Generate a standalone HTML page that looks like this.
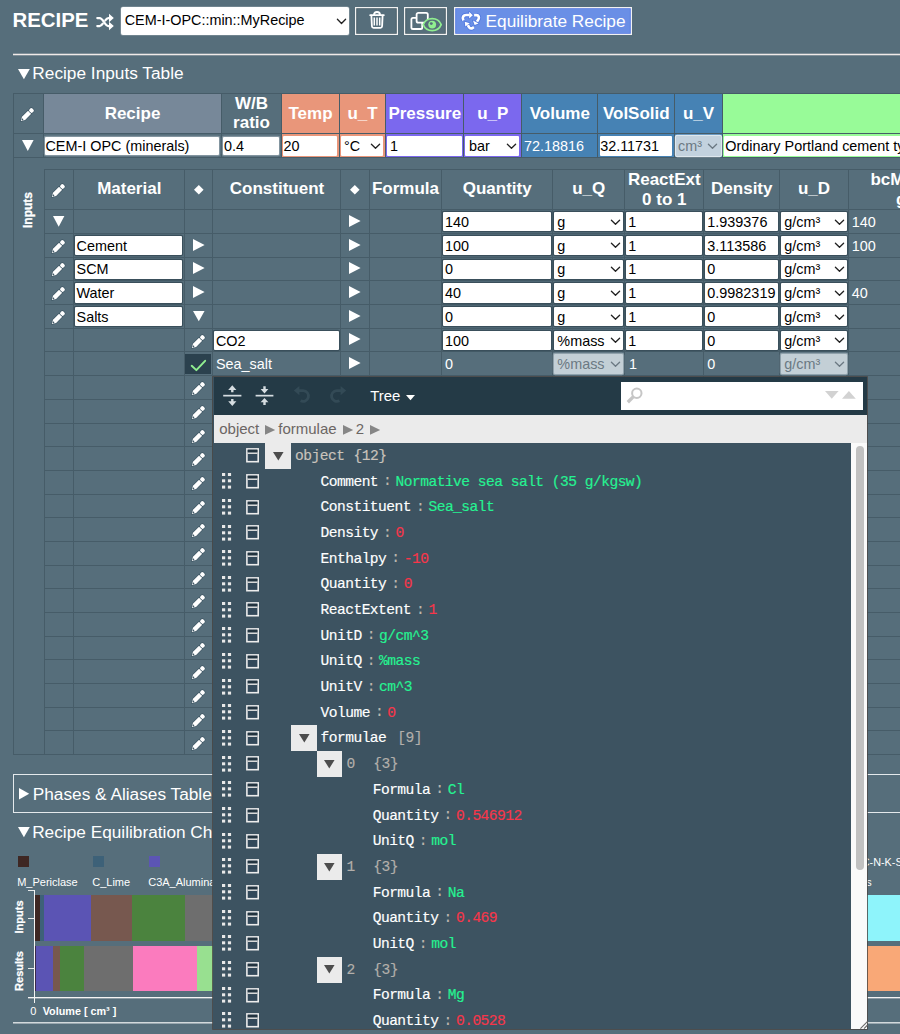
<!DOCTYPE html>
<html lang="en"><head><meta charset="utf-8"><title>Recipe</title>
<style>
html,body{margin:0;padding:0;width:900px;height:1034px;overflow:hidden;background:#566e7b;}
body{font-family:"Liberation Sans",sans-serif;}
#app{position:relative;left:0;top:0;width:900px;height:1034px;overflow:hidden;background:#566e7b;}
#app div,#app svg{position:absolute;box-sizing:border-box;}
svg{overflow:visible;display:block;}
</style></head><body><main id="app">
<div style="top:7.30px;font-size:20.4px;line-height:26px;height:26px;color:#fff;white-space:pre;font-weight:bold;left:12.53px;">RECIPE</div>
<svg style="left:96.00px;top:13.70px;" width="18" height="16" viewBox="0 0 18 16"><g fill="none" stroke="#fff" stroke-width="2.25" stroke-linecap="round" stroke-linejoin="round"><path d="M1.3 4 H3.6 C7.4 4 8.6 12 12.4 12 H14"/><path d="M1.3 12 H3.6 C5 12 6 10.9 6.8 9.7"/><path d="M9.3 6.3 C10.1 5.1 11 4 12.4 4 H14"/></g><path d="M13 -0.2 L17.8 4 L13 8.2 Z M13 7.8 L17.8 12 L13 16.2 Z" fill="#fff"/></svg>
<div style="left:121.00px;top:6.60px;width:228.00px;height:28.20px;background:#fff;border-radius:2px;box-shadow:0 0 0 0.6px #8a9aa3;"></div>
<div style="top:10.10px;font-size:14.4px;line-height:20px;height:20px;color:#000;white-space:pre;left:124.66px;">CEM-I-OPC::min::MyRecipe</div>
<svg style="left:336.50px;top:17.60px;" width="9" height="6.8" viewBox="0 0 9 6.8"><path d="M0.4 1.3 L4.5 5.5 L8.6 1.3" fill="none" stroke="#222" stroke-width="1.3" stroke-linecap="round" stroke-linejoin="round"/></svg>
<div style="left:355.00px;top:6.70px;width:43.00px;height:28.20px;background:#566e7b;box-shadow:inset 0 0 0 1.25px #f2f2f2, inset 0 0 0 2.1px rgba(40,58,68,.5);"></div>
<svg style="left:368.60px;top:11.00px;" width="16" height="18" viewBox="0 0 16 18"><g fill="none" stroke="#fff" stroke-width="1.8" stroke-linecap="round" stroke-linejoin="round"><path d="M1.2 4.2 H14.8"/><path d="M5 3.8 Q5 1 8 1 Q11 1 11 3.8"/><path d="M2.4 4.6 L2.9 15.2 Q3 16.8 4.6 16.8 H11.4 Q13 16.8 13.1 15.2 L13.6 4.6"/></g><g fill="none" stroke="#fff" stroke-width="1.5" stroke-linecap="butt"><path d="M5.3 6.6 V14.4 M8 6.6 V14.4 M10.7 6.6 V14.4"/></g></svg>
<div style="left:404.00px;top:6.70px;width:43.00px;height:28.20px;background:#566e7b;box-shadow:inset 0 0 0 1.25px #f2f2f2, inset 0 0 0 2.1px rgba(40,58,68,.5);"></div>
<svg style="left:410.00px;top:11.50px;" width="34" height="20" viewBox="0 0 34 20"><g fill="none" stroke="#fff" stroke-width="1.8" stroke-linejoin="round"><rect x="6.6" y="0.9" width="11.2" height="9.8" rx="1.7"/><path d="M6.6 5.8 H3 Q1.4 5.8 1.4 7.4 V15.4 Q1.4 17 3 17 H10.6 Q12.2 17 12.2 15.4 V10.7"/></g><g fill="none" stroke="#90ee90" stroke-width="1.7" stroke-linejoin="round"><path d="M13.2 12.6 C16.5 4.6 27.9 4.6 31.2 12.6 C27.9 20.6 16.5 20.6 13.2 12.6 Z" fill="#566e7b"/></g><circle cx="22.2" cy="12.6" r="3.9" fill="#90ee90"/><circle cx="21.3" cy="11.6" r="1.45" fill="#566e7b"/></svg>
<div style="left:453.60px;top:6.70px;width:178.00px;height:28.20px;background:#6a8fe6;box-shadow:inset 0 0 0 1.25px #f2f2f2, inset 0 0 0 2.1px #4a70e0;"></div>
<svg style="left:456.00px;top:6.00px;" width="32" height="30" viewBox="0 0 32 30"><g fill="none" stroke="#4f76df" stroke-width="4.3" stroke-linejoin="round"><path d="M7.4 14.3 C5.9 11.2 7.4 9.0 10.2 9.0 H13.4"/><path d="M18.1 9.1 H20.4 C22.6 9.1 23.6 11.4 22.4 13.4 L21.0 15.6"/><path d="M17.9 21.1 L16.6 22.0 C15.0 22.8 13.6 22.2 12.8 20.8 L11.9 19.2"/></g><g fill="#4f76df" stroke="#4f76df" stroke-width="1.6" stroke-linejoin="round"><path d="M13.2 5.7 L16.8 9.2 L13.2 12.4 Z"/><path d="M17.0 14.6 L22.6 17.4 L18.6 18.9 Z"/><path d="M8.7 15.8 L13.8 17.3 L9.3 20.4 Z"/></g><g fill="none" stroke="#fff" stroke-width="2.7" stroke-linejoin="round"><path d="M7.4 14.3 C5.9 11.2 7.4 9.0 10.2 9.0 H13.4"/><path d="M18.1 9.1 H20.4 C22.6 9.1 23.6 11.4 22.4 13.4 L21.0 15.6"/><path d="M17.9 21.1 L16.6 22.0 C15.0 22.8 13.6 22.2 12.8 20.8 L11.9 19.2"/></g><g fill="#fff"><path d="M13.2 5.7 L16.8 9.2 L13.2 12.4 Z"/><path d="M17.0 14.6 L22.6 17.4 L18.6 18.9 Z"/><path d="M8.7 15.8 L13.8 17.3 L9.3 20.4 Z"/></g></svg>
<div style="top:8.80px;font-size:17.25px;line-height:24px;height:24px;color:#fff;white-space:pre;left:485.56px;">Equilibrate Recipe</div>
<div style="left:13.00px;top:54.00px;width:887.00px;height:1.00px;background:#f0eae8;"></div>
<div style="left:13.00px;top:53.00px;width:887.00px;height:1.00px;background:rgba(240,234,232,.28);"></div>
<div style="left:13.00px;top:55.00px;width:887.00px;height:1.00px;background:rgba(240,234,232,.28);"></div>
<svg style="left:17.90px;top:68.90px;" width="11.8" height="10.2" viewBox="0 0 11.8 10.2"><path d="M0 0 H11.8 L5.9 10.2 Z" fill="#fff"/></svg>
<div style="top:61.40px;font-size:17.25px;line-height:24px;height:24px;color:#fff;white-space:pre;left:32.36px;">Recipe Inputs Table</div>
<div style="left:43.00px;top:92.60px;width:178.00px;height:40.60px;background:#778899;"></div>
<div style="left:281.00px;top:92.60px;width:58.00px;height:40.60px;background:#e9967a;"></div>
<div style="left:281.00px;top:133.20px;width:58.00px;height:24.00px;background:#e9967a;"></div>
<div style="left:339.00px;top:92.60px;width:46.00px;height:40.60px;background:#e9967a;"></div>
<div style="left:339.00px;top:133.20px;width:46.00px;height:24.00px;background:#e9967a;"></div>
<div style="left:385.00px;top:92.60px;width:78.60px;height:40.60px;background:#7b68ee;"></div>
<div style="left:385.00px;top:133.20px;width:78.60px;height:24.00px;background:#7b68ee;"></div>
<div style="left:463.60px;top:92.60px;width:57.40px;height:40.60px;background:#7b68ee;"></div>
<div style="left:463.60px;top:133.20px;width:57.40px;height:24.00px;background:#7b68ee;"></div>
<div style="left:521.00px;top:92.60px;width:76.60px;height:40.60px;background:#4682b4;"></div>
<div style="left:521.00px;top:133.20px;width:76.60px;height:24.00px;background:#4682b4;"></div>
<div style="left:597.60px;top:92.60px;width:76.40px;height:40.60px;background:#4682b4;"></div>
<div style="left:597.60px;top:133.20px;width:76.40px;height:24.00px;background:#4682b4;"></div>
<div style="left:674.00px;top:92.60px;width:48.00px;height:40.60px;background:#4682b4;"></div>
<div style="left:674.00px;top:133.20px;width:48.00px;height:24.00px;background:#4682b4;"></div>
<div style="left:722.00px;top:92.60px;width:179.00px;height:40.60px;background:#98fb98;"></div>
<div style="left:722.00px;top:133.20px;width:179.00px;height:24.00px;background:#98fb98;"></div>
<div style="left:13.00px;top:92.60px;width:1.00px;height:64.60px;background:#465c68;"></div>
<div style="left:43.00px;top:92.60px;width:1.00px;height:64.60px;background:#465c68;"></div>
<div style="left:221.00px;top:92.60px;width:1.00px;height:64.60px;background:#465c68;"></div>
<div style="left:281.00px;top:92.60px;width:1.00px;height:64.60px;background:#465c68;"></div>
<div style="left:339.00px;top:92.60px;width:1.00px;height:64.60px;background:#465c68;"></div>
<div style="left:385.00px;top:92.60px;width:1.00px;height:64.60px;background:#465c68;"></div>
<div style="left:463.00px;top:92.60px;width:1.00px;height:64.60px;background:#465c68;"></div>
<div style="left:521.00px;top:92.60px;width:1.00px;height:64.60px;background:#465c68;"></div>
<div style="left:597.00px;top:92.60px;width:1.00px;height:64.60px;background:#465c68;"></div>
<div style="left:674.00px;top:92.60px;width:1.00px;height:64.60px;background:#465c68;"></div>
<div style="left:722.00px;top:92.60px;width:1.00px;height:64.60px;background:#465c68;"></div>
<div style="left:13.00px;top:92.60px;width:887.00px;height:1.00px;background:#465c68;"></div>
<div style="left:13.00px;top:133.20px;width:887.00px;height:1.00px;background:#465c68;"></div>
<div style="left:13.00px;top:157.20px;width:887.00px;height:1.00px;background:#465c68;"></div>
<svg style="left:20.10px;top:107.30px;" width="15" height="15" viewBox="-0.5 -0.5 15 15"><g transform="translate(0.3,13.6) rotate(-45)" stroke="#3d5563" stroke-width="1.2" paint-order="stroke" fill="#fff" stroke-linejoin="round"><path d="M0 0 L3.9 -2.25 L12.5 -2.25 L12.5 2.25 L3.9 2.25 Z"/><rect x="13.05" y="-2.25" width="4.1" height="4.5" rx="1.6"/><circle cx="2.3" cy="0" r="0.85" fill="#3d5563" stroke="none"/></g></svg>
<div style="top:102.00px;font-size:17px;line-height:23px;height:23px;color:#fff;white-space:pre;font-weight:bold;left:32.50px;width:200px;text-align:center;">Recipe</div>
<div style="top:91.90px;font-size:17px;line-height:23px;height:23px;color:#fff;white-space:pre;font-weight:bold;left:151.50px;width:200px;text-align:center;">W/B</div>
<div style="top:111.10px;font-size:17px;line-height:23px;height:23px;color:#fff;white-space:pre;font-weight:bold;left:151.50px;width:200px;text-align:center;">ratio</div>
<div style="top:102.00px;font-size:17px;line-height:23px;height:23px;color:#fff;white-space:pre;font-weight:bold;left:210.50px;width:200px;text-align:center;">Temp</div>
<div style="top:102.00px;font-size:17px;line-height:23px;height:23px;color:#fff;white-space:pre;font-weight:bold;left:262.50px;width:200px;text-align:center;">u_T</div>
<div style="top:102.00px;font-size:17px;line-height:23px;height:23px;color:#fff;white-space:pre;font-weight:bold;left:324.80px;width:200px;text-align:center;">Pressure</div>
<div style="top:102.00px;font-size:17px;line-height:23px;height:23px;color:#fff;white-space:pre;font-weight:bold;left:392.80px;width:200px;text-align:center;">u_P</div>
<div style="top:102.00px;font-size:17px;line-height:23px;height:23px;color:#fff;white-space:pre;font-weight:bold;left:459.80px;width:200px;text-align:center;">Volume</div>
<div style="top:102.00px;font-size:17px;line-height:23px;height:23px;color:#fff;white-space:pre;font-weight:bold;left:536.30px;width:200px;text-align:center;">VolSolid</div>
<div style="top:102.00px;font-size:17px;line-height:23px;height:23px;color:#fff;white-space:pre;font-weight:bold;left:598.50px;width:200px;text-align:center;">u_V</div>
<svg style="left:22.40px;top:140.40px;" width="11.6" height="11" viewBox="0 0 11.6 11"><path d="M0 0 H11.6 L5.8 11 Z" fill="#fff"/></svg>
<div style="left:44.60px;top:136.60px;width:174.60px;height:18.80px;background:#fff;border-radius:1px;box-shadow:0 0 0 1.15px #8395a0;"></div>
<div style="top:135.60px;font-size:14.4px;line-height:20px;height:20px;color:#000;white-space:pre;left:45.46px;">CEM-I OPC (minerals)</div>
<div style="left:222.60px;top:136.60px;width:56.40px;height:18.80px;background:#fff;border-radius:1px;box-shadow:0 0 0 1.15px #8395a0;"></div>
<div style="top:135.60px;font-size:14.4px;line-height:20px;height:20px;color:#000;white-space:pre;left:223.96px;">0.4</div>
<div style="left:283.20px;top:136.20px;width:53.80px;height:19.40px;background:#fff;border-radius:1px;"></div>
<div style="top:135.60px;font-size:14.4px;line-height:20px;height:20px;color:#000;white-space:pre;left:283.56px;">20</div>
<div style="left:340.80px;top:136.20px;width:42.60px;height:19.40px;background:#fff;border-radius:1px;"></div>
<div style="top:135.60px;font-size:14.4px;line-height:20px;height:20px;color:#000;white-space:pre;left:343.96px;">°C</div>
<svg style="left:371.20px;top:143.20px;" width="9" height="6.6" viewBox="0 0 9 6.6"><path d="M0.4 1.3 L4.5 5.3 L8.6 1.3" fill="none" stroke="#222" stroke-width="1.3" stroke-linecap="round" stroke-linejoin="round"/></svg>
<div style="left:387.20px;top:136.20px;width:74.40px;height:19.40px;background:#fff;border-radius:1px;"></div>
<div style="top:135.60px;font-size:14.4px;line-height:20px;height:20px;color:#000;white-space:pre;left:389.96px;">1</div>
<div style="left:465.40px;top:136.20px;width:54.00px;height:19.40px;background:#fff;border-radius:1px;"></div>
<div style="top:135.60px;font-size:14.4px;line-height:20px;height:20px;color:#000;white-space:pre;left:468.96px;">bar</div>
<svg style="left:506.50px;top:143.20px;" width="9" height="6.6" viewBox="0 0 9 6.6"><path d="M0.4 1.3 L4.5 5.3 L8.6 1.3" fill="none" stroke="#222" stroke-width="1.3" stroke-linecap="round" stroke-linejoin="round"/></svg>
<div style="top:135.60px;font-size:14.4px;line-height:20px;height:20px;color:#fff;white-space:pre;left:523.96px;">72.18816</div>
<div style="left:599.60px;top:136.20px;width:72.40px;height:19.40px;background:#fff;border-radius:1px;"></div>
<div style="top:135.60px;font-size:14.4px;line-height:20px;height:20px;color:#000;white-space:pre;left:600.16px;">32.11731</div>
<div style="left:675.60px;top:136.20px;width:45.00px;height:19.40px;background:#c3d2de;border-radius:1px;box-shadow:0 0 0 1.15px #dfe8ee;"></div>
<div style="top:135.60px;font-size:14.4px;line-height:20px;height:20px;color:#6b7983;white-space:pre;left:677.96px;">cm³</div>
<svg style="left:708.40px;top:143.20px;" width="9" height="6.6" viewBox="0 0 9 6.6"><path d="M0.4 1.3 L4.5 5.3 L8.6 1.3" fill="none" stroke="#6b7983" stroke-width="1.3" stroke-linecap="round" stroke-linejoin="round"/></svg>
<div style="left:724.00px;top:136.20px;width:180.00px;height:19.40px;background:#fff;border-radius:1px;"></div>
<div style="top:135.60px;font-size:14.4px;line-height:20px;height:20px;color:#000;white-space:pre;left:725.36px;">Ordinary Portland cement type I (minerals)</div>
<div style="left:13.00px;top:157.20px;width:1.00px;height:597.97px;background:#465c68;"></div>
<div style="left:13.00px;top:754.17px;width:887.00px;height:1.00px;background:#465c68;"></div>
<div style="left:-22px;top:200px;width:100px;height:20px;line-height:20px;text-align:center;font-size:12px;font-weight:bold;color:#fff;-webkit-text-stroke:0.3px #fff;transform:rotate(-90deg);">Inputs</div>
<div style="left:44.00px;top:168.80px;width:1.00px;height:585.37px;background:#465c68;"></div>
<div style="left:73.00px;top:168.80px;width:1.00px;height:585.37px;background:#465c68;"></div>
<div style="left:184.00px;top:168.80px;width:1.00px;height:585.37px;background:#465c68;"></div>
<div style="left:212.00px;top:168.80px;width:1.00px;height:585.37px;background:#465c68;"></div>
<div style="left:340.00px;top:168.80px;width:1.00px;height:585.37px;background:#465c68;"></div>
<div style="left:369.00px;top:168.80px;width:1.00px;height:585.37px;background:#465c68;"></div>
<div style="left:441.00px;top:168.80px;width:1.00px;height:585.37px;background:#465c68;"></div>
<div style="left:552.00px;top:168.80px;width:1.00px;height:585.37px;background:#465c68;"></div>
<div style="left:624.00px;top:168.80px;width:1.00px;height:585.37px;background:#465c68;"></div>
<div style="left:703.00px;top:168.80px;width:1.00px;height:585.37px;background:#465c68;"></div>
<div style="left:779.00px;top:168.80px;width:1.00px;height:585.37px;background:#465c68;"></div>
<div style="left:848.00px;top:168.80px;width:1.00px;height:585.37px;background:#465c68;"></div>
<div style="left:44.50px;top:168.80px;width:855.50px;height:1.00px;background:#465c68;"></div>
<div style="left:44.50px;top:209.30px;width:855.50px;height:1.00px;background:#465c68;"></div>
<div style="left:44.50px;top:232.99px;width:855.50px;height:1.00px;background:#465c68;"></div>
<div style="left:44.50px;top:256.68px;width:855.50px;height:1.00px;background:#465c68;"></div>
<div style="left:44.50px;top:280.37px;width:855.50px;height:1.00px;background:#465c68;"></div>
<div style="left:44.50px;top:304.06px;width:855.50px;height:1.00px;background:#465c68;"></div>
<div style="left:44.50px;top:327.75px;width:855.50px;height:1.00px;background:#465c68;"></div>
<div style="left:44.50px;top:351.44px;width:855.50px;height:1.00px;background:#465c68;"></div>
<div style="left:44.50px;top:375.13px;width:855.50px;height:1.00px;background:#465c68;"></div>
<div style="left:44.50px;top:398.82px;width:855.50px;height:1.00px;background:#465c68;"></div>
<div style="left:44.50px;top:422.51px;width:855.50px;height:1.00px;background:#465c68;"></div>
<div style="left:44.50px;top:446.20px;width:855.50px;height:1.00px;background:#465c68;"></div>
<div style="left:44.50px;top:469.89px;width:855.50px;height:1.00px;background:#465c68;"></div>
<div style="left:44.50px;top:493.58px;width:855.50px;height:1.00px;background:#465c68;"></div>
<div style="left:44.50px;top:517.27px;width:855.50px;height:1.00px;background:#465c68;"></div>
<div style="left:44.50px;top:540.96px;width:855.50px;height:1.00px;background:#465c68;"></div>
<div style="left:44.50px;top:564.65px;width:855.50px;height:1.00px;background:#465c68;"></div>
<div style="left:44.50px;top:588.34px;width:855.50px;height:1.00px;background:#465c68;"></div>
<div style="left:44.50px;top:612.03px;width:855.50px;height:1.00px;background:#465c68;"></div>
<div style="left:44.50px;top:635.72px;width:855.50px;height:1.00px;background:#465c68;"></div>
<div style="left:44.50px;top:659.41px;width:855.50px;height:1.00px;background:#465c68;"></div>
<div style="left:44.50px;top:683.10px;width:855.50px;height:1.00px;background:#465c68;"></div>
<div style="left:44.50px;top:706.79px;width:855.50px;height:1.00px;background:#465c68;"></div>
<div style="left:44.50px;top:730.48px;width:855.50px;height:1.00px;background:#465c68;"></div>
<div style="left:44.50px;top:754.17px;width:855.50px;height:1.00px;background:#465c68;"></div>
<svg style="left:51.30px;top:183.10px;" width="15" height="15" viewBox="-0.5 -0.5 15 15"><g transform="translate(0.3,13.6) rotate(-45)" stroke="#3d5563" stroke-width="1.2" paint-order="stroke" fill="#fff" stroke-linejoin="round"><path d="M0 0 L3.9 -2.25 L12.5 -2.25 L12.5 2.25 L3.9 2.25 Z"/><rect x="13.05" y="-2.25" width="4.1" height="4.5" rx="1.6"/><circle cx="2.3" cy="0" r="0.85" fill="#3d5563" stroke="none"/></g></svg>
<div style="top:177.00px;font-size:17px;line-height:23px;height:23px;color:#fff;white-space:pre;font-weight:bold;left:29.25px;width:200px;text-align:center;">Material</div>
<svg style="left:193.60px;top:185.00px;" width="9.6" height="9.6" viewBox="0 0 9.6 9.6"><path d="M4.8 0 L9.6 4.8 L4.8 9.6 L0 4.8 Z" fill="#fff"/></svg>
<div style="top:177.00px;font-size:17px;line-height:23px;height:23px;color:#fff;white-space:pre;font-weight:bold;left:177.00px;width:200px;text-align:center;">Constituent</div>
<svg style="left:350.00px;top:185.00px;" width="9.6" height="9.6" viewBox="0 0 9.6 9.6"><path d="M4.8 0 L9.6 4.8 L4.8 9.6 L0 4.8 Z" fill="#fff"/></svg>
<div style="top:177.00px;font-size:17px;line-height:23px;height:23px;color:#fff;white-space:pre;font-weight:bold;left:305.50px;width:200px;text-align:center;">Formula</div>
<div style="top:177.00px;font-size:17px;line-height:23px;height:23px;color:#fff;white-space:pre;font-weight:bold;left:397.25px;width:200px;text-align:center;">Quantity</div>
<div style="top:177.00px;font-size:17px;line-height:23px;height:23px;color:#fff;white-space:pre;font-weight:bold;left:488.75px;width:200px;text-align:center;">u_Q</div>
<div style="top:168.40px;font-size:17px;line-height:23px;height:23px;color:#fff;white-space:pre;font-weight:bold;left:564.30px;width:200px;text-align:center;">ReactExt</div>
<div style="top:187.50px;font-size:17px;line-height:23px;height:23px;color:#fff;white-space:pre;font-weight:bold;left:564.30px;width:200px;text-align:center;">0 to 1</div>
<div style="top:177.00px;font-size:17px;line-height:23px;height:23px;color:#fff;white-space:pre;font-weight:bold;left:641.80px;width:200px;text-align:center;">Density</div>
<div style="top:177.00px;font-size:17px;line-height:23px;height:23px;color:#fff;white-space:pre;font-weight:bold;left:714.00px;width:200px;text-align:center;">u_D</div>
<div style="top:168.40px;font-size:17px;line-height:23px;height:23px;color:#fff;white-space:pre;font-weight:bold;left:870.38px;">bcMass</div>
<div style="top:187.50px;font-size:17px;line-height:23px;height:23px;color:#fff;white-space:pre;font-weight:bold;left:896.08px;">g</div>
<svg style="left:53.30px;top:216.20px;" width="11.4" height="10.8" viewBox="0 0 11.4 10.8"><path d="M0 0 H11.4 L5.7 10.8 Z" fill="#fff"/></svg>
<div style="left:443.00px;top:212.20px;width:108.00px;height:19.30px;background:#fff;border-radius:1px;box-shadow:0 0 0 1.15px #3a4f5b;"></div>
<div style="top:212.10px;font-size:14.4px;line-height:20px;height:20px;color:#000;white-space:pre;left:444.96px;">140</div>
<div style="left:553.80px;top:212.20px;width:69.20px;height:19.30px;background:#fff;border-radius:1px;box-shadow:0 0 0 1.15px #3a4f5b;"></div>
<div style="top:212.10px;font-size:14.4px;line-height:20px;height:20px;color:#000;white-space:pre;left:557.36px;">g</div>
<svg style="left:610.60px;top:218.80px;" width="9" height="6.6" viewBox="0 0 9 6.6"><path d="M0.4 1.3 L4.5 5.3 L8.6 1.3" fill="none" stroke="#222" stroke-width="1.3" stroke-linecap="round" stroke-linejoin="round"/></svg>
<div style="left:625.80px;top:212.20px;width:75.80px;height:19.30px;background:#fff;border-radius:1px;box-shadow:0 0 0 1.15px #3a4f5b;"></div>
<div style="top:212.10px;font-size:14.4px;line-height:20px;height:20px;color:#000;white-space:pre;left:628.16px;">1</div>
<div style="left:705.20px;top:212.20px;width:72.60px;height:19.30px;background:#fff;border-radius:1px;box-shadow:0 0 0 1.15px #3a4f5b;"></div>
<div style="top:212.10px;font-size:14.4px;line-height:20px;height:20px;color:#000;white-space:pre;left:707.36px;">1.939376</div>
<div style="left:780.60px;top:212.20px;width:66.00px;height:19.30px;background:#fff;border-radius:1px;box-shadow:0 0 0 1.15px #3a4f5b;"></div>
<div style="top:212.10px;font-size:14.4px;line-height:20px;height:20px;color:#000;white-space:pre;left:784.36px;">g/cm³</div>
<svg style="left:834.60px;top:218.80px;" width="9" height="6.6" viewBox="0 0 9 6.6"><path d="M0.4 1.3 L4.5 5.3 L8.6 1.3" fill="none" stroke="#222" stroke-width="1.3" stroke-linecap="round" stroke-linejoin="round"/></svg>
<div style="top:212.10px;font-size:14.4px;line-height:20px;height:20px;color:#fff;white-space:pre;left:851.76px;">140</div>
<svg style="left:349.00px;top:215.00px;" width="11.6" height="12" viewBox="0 0 11.6 12"><path d="M0 0 L11.6 6.0 L0 12 Z" fill="#fff"/></svg>
<svg style="left:51.30px;top:238.79px;" width="15" height="15" viewBox="-0.5 -0.5 15 15"><g transform="translate(0.3,13.6) rotate(-45)" stroke="#3d5563" stroke-width="1.2" paint-order="stroke" fill="#fff" stroke-linejoin="round"><path d="M0 0 L3.9 -2.25 L12.5 -2.25 L12.5 2.25 L3.9 2.25 Z"/><rect x="13.05" y="-2.25" width="4.1" height="4.5" rx="1.6"/><circle cx="2.3" cy="0" r="0.85" fill="#3d5563" stroke="none"/></g></svg>
<div style="left:75.00px;top:235.89px;width:107.40px;height:19.30px;background:#fff;border-radius:1px;box-shadow:0 0 0 1.15px #3a4f5b;"></div>
<div style="top:235.79px;font-size:14.4px;line-height:20px;height:20px;color:#000;white-space:pre;left:76.56px;">Cement</div>
<svg style="left:193.20px;top:238.69px;" width="11.6" height="12" viewBox="0 0 11.6 12"><path d="M0 0 L11.6 6.0 L0 12 Z" fill="#fff"/></svg>
<div style="left:443.00px;top:235.89px;width:108.00px;height:19.30px;background:#fff;border-radius:1px;box-shadow:0 0 0 1.15px #3a4f5b;"></div>
<div style="top:235.79px;font-size:14.4px;line-height:20px;height:20px;color:#000;white-space:pre;left:444.96px;">100</div>
<div style="left:553.80px;top:235.89px;width:69.20px;height:19.30px;background:#fff;border-radius:1px;box-shadow:0 0 0 1.15px #3a4f5b;"></div>
<div style="top:235.79px;font-size:14.4px;line-height:20px;height:20px;color:#000;white-space:pre;left:557.36px;">g</div>
<svg style="left:610.60px;top:242.49px;" width="9" height="6.6" viewBox="0 0 9 6.6"><path d="M0.4 1.3 L4.5 5.3 L8.6 1.3" fill="none" stroke="#222" stroke-width="1.3" stroke-linecap="round" stroke-linejoin="round"/></svg>
<div style="left:625.80px;top:235.89px;width:75.80px;height:19.30px;background:#fff;border-radius:1px;box-shadow:0 0 0 1.15px #3a4f5b;"></div>
<div style="top:235.79px;font-size:14.4px;line-height:20px;height:20px;color:#000;white-space:pre;left:628.16px;">1</div>
<div style="left:705.20px;top:235.89px;width:72.60px;height:19.30px;background:#fff;border-radius:1px;box-shadow:0 0 0 1.15px #3a4f5b;"></div>
<div style="top:235.79px;font-size:14.4px;line-height:20px;height:20px;color:#000;white-space:pre;left:707.36px;">3.113586</div>
<div style="left:780.60px;top:235.89px;width:66.00px;height:19.30px;background:#fff;border-radius:1px;box-shadow:0 0 0 1.15px #3a4f5b;"></div>
<div style="top:235.79px;font-size:14.4px;line-height:20px;height:20px;color:#000;white-space:pre;left:784.36px;">g/cm³</div>
<svg style="left:834.60px;top:242.49px;" width="9" height="6.6" viewBox="0 0 9 6.6"><path d="M0.4 1.3 L4.5 5.3 L8.6 1.3" fill="none" stroke="#222" stroke-width="1.3" stroke-linecap="round" stroke-linejoin="round"/></svg>
<div style="top:235.79px;font-size:14.4px;line-height:20px;height:20px;color:#fff;white-space:pre;left:851.76px;">100</div>
<svg style="left:349.00px;top:238.69px;" width="11.6" height="12" viewBox="0 0 11.6 12"><path d="M0 0 L11.6 6.0 L0 12 Z" fill="#fff"/></svg>
<svg style="left:51.30px;top:262.48px;" width="15" height="15" viewBox="-0.5 -0.5 15 15"><g transform="translate(0.3,13.6) rotate(-45)" stroke="#3d5563" stroke-width="1.2" paint-order="stroke" fill="#fff" stroke-linejoin="round"><path d="M0 0 L3.9 -2.25 L12.5 -2.25 L12.5 2.25 L3.9 2.25 Z"/><rect x="13.05" y="-2.25" width="4.1" height="4.5" rx="1.6"/><circle cx="2.3" cy="0" r="0.85" fill="#3d5563" stroke="none"/></g></svg>
<div style="left:75.00px;top:259.58px;width:107.40px;height:19.30px;background:#fff;border-radius:1px;box-shadow:0 0 0 1.15px #3a4f5b;"></div>
<div style="top:259.48px;font-size:14.4px;line-height:20px;height:20px;color:#000;white-space:pre;left:76.56px;">SCM</div>
<svg style="left:193.20px;top:262.38px;" width="11.6" height="12" viewBox="0 0 11.6 12"><path d="M0 0 L11.6 6.0 L0 12 Z" fill="#fff"/></svg>
<div style="left:443.00px;top:259.58px;width:108.00px;height:19.30px;background:#fff;border-radius:1px;box-shadow:0 0 0 1.15px #3a4f5b;"></div>
<div style="top:259.48px;font-size:14.4px;line-height:20px;height:20px;color:#000;white-space:pre;left:444.96px;">0</div>
<div style="left:553.80px;top:259.58px;width:69.20px;height:19.30px;background:#fff;border-radius:1px;box-shadow:0 0 0 1.15px #3a4f5b;"></div>
<div style="top:259.48px;font-size:14.4px;line-height:20px;height:20px;color:#000;white-space:pre;left:557.36px;">g</div>
<svg style="left:610.60px;top:266.18px;" width="9" height="6.6" viewBox="0 0 9 6.6"><path d="M0.4 1.3 L4.5 5.3 L8.6 1.3" fill="none" stroke="#222" stroke-width="1.3" stroke-linecap="round" stroke-linejoin="round"/></svg>
<div style="left:625.80px;top:259.58px;width:75.80px;height:19.30px;background:#fff;border-radius:1px;box-shadow:0 0 0 1.15px #3a4f5b;"></div>
<div style="top:259.48px;font-size:14.4px;line-height:20px;height:20px;color:#000;white-space:pre;left:628.16px;">1</div>
<div style="left:705.20px;top:259.58px;width:72.60px;height:19.30px;background:#fff;border-radius:1px;box-shadow:0 0 0 1.15px #3a4f5b;"></div>
<div style="top:259.48px;font-size:14.4px;line-height:20px;height:20px;color:#000;white-space:pre;left:707.36px;">0</div>
<div style="left:780.60px;top:259.58px;width:66.00px;height:19.30px;background:#fff;border-radius:1px;box-shadow:0 0 0 1.15px #3a4f5b;"></div>
<div style="top:259.48px;font-size:14.4px;line-height:20px;height:20px;color:#000;white-space:pre;left:784.36px;">g/cm³</div>
<svg style="left:834.60px;top:266.18px;" width="9" height="6.6" viewBox="0 0 9 6.6"><path d="M0.4 1.3 L4.5 5.3 L8.6 1.3" fill="none" stroke="#222" stroke-width="1.3" stroke-linecap="round" stroke-linejoin="round"/></svg>
<svg style="left:349.00px;top:262.38px;" width="11.6" height="12" viewBox="0 0 11.6 12"><path d="M0 0 L11.6 6.0 L0 12 Z" fill="#fff"/></svg>
<svg style="left:51.30px;top:286.17px;" width="15" height="15" viewBox="-0.5 -0.5 15 15"><g transform="translate(0.3,13.6) rotate(-45)" stroke="#3d5563" stroke-width="1.2" paint-order="stroke" fill="#fff" stroke-linejoin="round"><path d="M0 0 L3.9 -2.25 L12.5 -2.25 L12.5 2.25 L3.9 2.25 Z"/><rect x="13.05" y="-2.25" width="4.1" height="4.5" rx="1.6"/><circle cx="2.3" cy="0" r="0.85" fill="#3d5563" stroke="none"/></g></svg>
<div style="left:75.00px;top:283.27px;width:107.40px;height:19.30px;background:#fff;border-radius:1px;box-shadow:0 0 0 1.15px #3a4f5b;"></div>
<div style="top:283.17px;font-size:14.4px;line-height:20px;height:20px;color:#000;white-space:pre;left:76.56px;">Water</div>
<svg style="left:193.20px;top:286.07px;" width="11.6" height="12" viewBox="0 0 11.6 12"><path d="M0 0 L11.6 6.0 L0 12 Z" fill="#fff"/></svg>
<div style="left:443.00px;top:283.27px;width:108.00px;height:19.30px;background:#fff;border-radius:1px;box-shadow:0 0 0 1.15px #3a4f5b;"></div>
<div style="top:283.17px;font-size:14.4px;line-height:20px;height:20px;color:#000;white-space:pre;left:444.96px;">40</div>
<div style="left:553.80px;top:283.27px;width:69.20px;height:19.30px;background:#fff;border-radius:1px;box-shadow:0 0 0 1.15px #3a4f5b;"></div>
<div style="top:283.17px;font-size:14.4px;line-height:20px;height:20px;color:#000;white-space:pre;left:557.36px;">g</div>
<svg style="left:610.60px;top:289.87px;" width="9" height="6.6" viewBox="0 0 9 6.6"><path d="M0.4 1.3 L4.5 5.3 L8.6 1.3" fill="none" stroke="#222" stroke-width="1.3" stroke-linecap="round" stroke-linejoin="round"/></svg>
<div style="left:625.80px;top:283.27px;width:75.80px;height:19.30px;background:#fff;border-radius:1px;box-shadow:0 0 0 1.15px #3a4f5b;"></div>
<div style="top:283.17px;font-size:14.4px;line-height:20px;height:20px;color:#000;white-space:pre;left:628.16px;">1</div>
<div style="left:705.20px;top:283.27px;width:72.60px;height:19.30px;background:#fff;border-radius:1px;box-shadow:0 0 0 1.15px #3a4f5b;"></div>
<div style="top:283.17px;font-size:14.4px;line-height:20px;height:20px;color:#000;white-space:pre;left:707.36px;">0.9982319</div>
<div style="left:780.60px;top:283.27px;width:66.00px;height:19.30px;background:#fff;border-radius:1px;box-shadow:0 0 0 1.15px #3a4f5b;"></div>
<div style="top:283.17px;font-size:14.4px;line-height:20px;height:20px;color:#000;white-space:pre;left:784.36px;">g/cm³</div>
<svg style="left:834.60px;top:289.87px;" width="9" height="6.6" viewBox="0 0 9 6.6"><path d="M0.4 1.3 L4.5 5.3 L8.6 1.3" fill="none" stroke="#222" stroke-width="1.3" stroke-linecap="round" stroke-linejoin="round"/></svg>
<div style="top:283.17px;font-size:14.4px;line-height:20px;height:20px;color:#fff;white-space:pre;left:851.76px;">40</div>
<svg style="left:349.00px;top:286.07px;" width="11.6" height="12" viewBox="0 0 11.6 12"><path d="M0 0 L11.6 6.0 L0 12 Z" fill="#fff"/></svg>
<svg style="left:51.30px;top:309.86px;" width="15" height="15" viewBox="-0.5 -0.5 15 15"><g transform="translate(0.3,13.6) rotate(-45)" stroke="#3d5563" stroke-width="1.2" paint-order="stroke" fill="#fff" stroke-linejoin="round"><path d="M0 0 L3.9 -2.25 L12.5 -2.25 L12.5 2.25 L3.9 2.25 Z"/><rect x="13.05" y="-2.25" width="4.1" height="4.5" rx="1.6"/><circle cx="2.3" cy="0" r="0.85" fill="#3d5563" stroke="none"/></g></svg>
<div style="left:75.00px;top:306.96px;width:107.40px;height:19.30px;background:#fff;border-radius:1px;box-shadow:0 0 0 1.15px #3a4f5b;"></div>
<div style="top:306.86px;font-size:14.4px;line-height:20px;height:20px;color:#000;white-space:pre;left:76.56px;">Salts</div>
<svg style="left:192.50px;top:310.66px;" width="11.6" height="10.2" viewBox="0 0 11.6 10.2"><path d="M0 0 H11.6 L5.8 10.2 Z" fill="#fff"/></svg>
<div style="left:443.00px;top:306.96px;width:108.00px;height:19.30px;background:#fff;border-radius:1px;box-shadow:0 0 0 1.15px #3a4f5b;"></div>
<div style="top:306.86px;font-size:14.4px;line-height:20px;height:20px;color:#000;white-space:pre;left:444.96px;">0</div>
<div style="left:553.80px;top:306.96px;width:69.20px;height:19.30px;background:#fff;border-radius:1px;box-shadow:0 0 0 1.15px #3a4f5b;"></div>
<div style="top:306.86px;font-size:14.4px;line-height:20px;height:20px;color:#000;white-space:pre;left:557.36px;">g</div>
<svg style="left:610.60px;top:313.56px;" width="9" height="6.6" viewBox="0 0 9 6.6"><path d="M0.4 1.3 L4.5 5.3 L8.6 1.3" fill="none" stroke="#222" stroke-width="1.3" stroke-linecap="round" stroke-linejoin="round"/></svg>
<div style="left:625.80px;top:306.96px;width:75.80px;height:19.30px;background:#fff;border-radius:1px;box-shadow:0 0 0 1.15px #3a4f5b;"></div>
<div style="top:306.86px;font-size:14.4px;line-height:20px;height:20px;color:#000;white-space:pre;left:628.16px;">1</div>
<div style="left:705.20px;top:306.96px;width:72.60px;height:19.30px;background:#fff;border-radius:1px;box-shadow:0 0 0 1.15px #3a4f5b;"></div>
<div style="top:306.86px;font-size:14.4px;line-height:20px;height:20px;color:#000;white-space:pre;left:707.36px;">0</div>
<div style="left:780.60px;top:306.96px;width:66.00px;height:19.30px;background:#fff;border-radius:1px;box-shadow:0 0 0 1.15px #3a4f5b;"></div>
<div style="top:306.86px;font-size:14.4px;line-height:20px;height:20px;color:#000;white-space:pre;left:784.36px;">g/cm³</div>
<svg style="left:834.60px;top:313.56px;" width="9" height="6.6" viewBox="0 0 9 6.6"><path d="M0.4 1.3 L4.5 5.3 L8.6 1.3" fill="none" stroke="#222" stroke-width="1.3" stroke-linecap="round" stroke-linejoin="round"/></svg>
<svg style="left:349.00px;top:309.76px;" width="11.6" height="12" viewBox="0 0 11.6 12"><path d="M0 0 L11.6 6.0 L0 12 Z" fill="#fff"/></svg>
<svg style="left:190.80px;top:333.55px;" width="15" height="15" viewBox="-0.5 -0.5 15 15"><g transform="translate(0.3,13.6) rotate(-45)" stroke="#3d5563" stroke-width="1.2" paint-order="stroke" fill="#fff" stroke-linejoin="round"><path d="M0 0 L3.9 -2.25 L12.5 -2.25 L12.5 2.25 L3.9 2.25 Z"/><rect x="13.05" y="-2.25" width="4.1" height="4.5" rx="1.6"/><circle cx="2.3" cy="0" r="0.85" fill="#3d5563" stroke="none"/></g></svg>
<div style="left:214.20px;top:330.65px;width:124.80px;height:19.30px;background:#fff;border-radius:1px;box-shadow:0 0 0 1.15px #3a4f5b;"></div>
<div style="top:330.55px;font-size:14.4px;line-height:20px;height:20px;color:#000;white-space:pre;left:215.96px;">CO2</div>
<div style="left:443.00px;top:330.65px;width:108.00px;height:19.30px;background:#fff;border-radius:1px;box-shadow:0 0 0 1.15px #3a4f5b;"></div>
<div style="top:330.55px;font-size:14.4px;line-height:20px;height:20px;color:#000;white-space:pre;left:444.96px;">100</div>
<div style="left:553.80px;top:330.65px;width:69.20px;height:19.30px;background:#fff;border-radius:1px;box-shadow:0 0 0 1.15px #3a4f5b;"></div>
<div style="top:330.55px;font-size:14.4px;line-height:20px;height:20px;color:#000;white-space:pre;left:557.36px;">%mass</div>
<svg style="left:610.60px;top:337.25px;" width="9" height="6.6" viewBox="0 0 9 6.6"><path d="M0.4 1.3 L4.5 5.3 L8.6 1.3" fill="none" stroke="#222" stroke-width="1.3" stroke-linecap="round" stroke-linejoin="round"/></svg>
<div style="left:625.80px;top:330.65px;width:75.80px;height:19.30px;background:#fff;border-radius:1px;box-shadow:0 0 0 1.15px #3a4f5b;"></div>
<div style="top:330.55px;font-size:14.4px;line-height:20px;height:20px;color:#000;white-space:pre;left:628.16px;">1</div>
<div style="left:705.20px;top:330.65px;width:72.60px;height:19.30px;background:#fff;border-radius:1px;box-shadow:0 0 0 1.15px #3a4f5b;"></div>
<div style="top:330.55px;font-size:14.4px;line-height:20px;height:20px;color:#000;white-space:pre;left:707.36px;">0</div>
<div style="left:780.60px;top:330.65px;width:66.00px;height:19.30px;background:#fff;border-radius:1px;box-shadow:0 0 0 1.15px #3a4f5b;"></div>
<div style="top:330.55px;font-size:14.4px;line-height:20px;height:20px;color:#000;white-space:pre;left:784.36px;">g/cm³</div>
<svg style="left:834.60px;top:337.25px;" width="9" height="6.6" viewBox="0 0 9 6.6"><path d="M0.4 1.3 L4.5 5.3 L8.6 1.3" fill="none" stroke="#222" stroke-width="1.3" stroke-linecap="round" stroke-linejoin="round"/></svg>
<svg style="left:349.00px;top:333.45px;" width="11.6" height="12" viewBox="0 0 11.6 12"><path d="M0 0 L11.6 6.0 L0 12 Z" fill="#fff"/></svg>
<div style="left:185.40px;top:353.64px;width:26.00px;height:20.20px;background:#2b414e;"></div>
<svg style="left:189.00px;top:357.74px;" width="19" height="14" viewBox="0 0 19 15"><path d="M2.2 8.4 L7.2 13 L16.6 3" fill="none" stroke="#90ee90" stroke-width="2.1" stroke-linecap="round" stroke-linejoin="round"/></svg>
<div style="top:354.24px;font-size:14.4px;line-height:20px;height:20px;color:#fff;white-space:pre;left:215.96px;">Sea_salt</div>
<div style="top:354.24px;font-size:14.4px;line-height:20px;height:20px;color:#fff;white-space:pre;left:444.96px;">0</div>
<div style="left:553.80px;top:354.34px;width:69.20px;height:19.30px;background:#c3cfd6;border-radius:1px;box-shadow:0 0 0 1.15px #8fa1ab;"></div>
<div style="top:354.24px;font-size:14.4px;line-height:20px;height:20px;color:#6b7983;white-space:pre;left:557.36px;">%mass</div>
<svg style="left:610.60px;top:360.94px;" width="9" height="6.6" viewBox="0 0 9 6.6"><path d="M0.4 1.3 L4.5 5.3 L8.6 1.3" fill="none" stroke="#6b7983" stroke-width="1.3" stroke-linecap="round" stroke-linejoin="round"/></svg>
<div style="top:354.24px;font-size:14.4px;line-height:20px;height:20px;color:#fff;white-space:pre;left:628.96px;">1</div>
<div style="top:354.24px;font-size:14.4px;line-height:20px;height:20px;color:#fff;white-space:pre;left:707.36px;">0</div>
<div style="left:780.60px;top:354.34px;width:66.00px;height:19.30px;background:#c3cfd6;border-radius:1px;box-shadow:0 0 0 1.15px #8fa1ab;"></div>
<div style="top:354.24px;font-size:14.4px;line-height:20px;height:20px;color:#6b7983;white-space:pre;left:784.36px;">g/cm³</div>
<svg style="left:834.60px;top:360.94px;" width="9" height="6.6" viewBox="0 0 9 6.6"><path d="M0.4 1.3 L4.5 5.3 L8.6 1.3" fill="none" stroke="#6b7983" stroke-width="1.3" stroke-linecap="round" stroke-linejoin="round"/></svg>
<svg style="left:349.00px;top:357.14px;" width="11.6" height="12" viewBox="0 0 11.6 12"><path d="M0 0 L11.6 6.0 L0 12 Z" fill="#fff"/></svg>
<svg style="left:190.80px;top:381.13px;" width="15" height="15" viewBox="-0.5 -0.5 15 15"><g transform="translate(0.3,13.6) rotate(-45)" stroke="#3d5563" stroke-width="1.2" paint-order="stroke" fill="#fff" stroke-linejoin="round"><path d="M0 0 L3.9 -2.25 L12.5 -2.25 L12.5 2.25 L3.9 2.25 Z"/><rect x="13.05" y="-2.25" width="4.1" height="4.5" rx="1.6"/><circle cx="2.3" cy="0" r="0.85" fill="#3d5563" stroke="none"/></g></svg>
<svg style="left:190.80px;top:404.82px;" width="15" height="15" viewBox="-0.5 -0.5 15 15"><g transform="translate(0.3,13.6) rotate(-45)" stroke="#3d5563" stroke-width="1.2" paint-order="stroke" fill="#fff" stroke-linejoin="round"><path d="M0 0 L3.9 -2.25 L12.5 -2.25 L12.5 2.25 L3.9 2.25 Z"/><rect x="13.05" y="-2.25" width="4.1" height="4.5" rx="1.6"/><circle cx="2.3" cy="0" r="0.85" fill="#3d5563" stroke="none"/></g></svg>
<svg style="left:190.80px;top:428.51px;" width="15" height="15" viewBox="-0.5 -0.5 15 15"><g transform="translate(0.3,13.6) rotate(-45)" stroke="#3d5563" stroke-width="1.2" paint-order="stroke" fill="#fff" stroke-linejoin="round"><path d="M0 0 L3.9 -2.25 L12.5 -2.25 L12.5 2.25 L3.9 2.25 Z"/><rect x="13.05" y="-2.25" width="4.1" height="4.5" rx="1.6"/><circle cx="2.3" cy="0" r="0.85" fill="#3d5563" stroke="none"/></g></svg>
<svg style="left:190.80px;top:452.20px;" width="15" height="15" viewBox="-0.5 -0.5 15 15"><g transform="translate(0.3,13.6) rotate(-45)" stroke="#3d5563" stroke-width="1.2" paint-order="stroke" fill="#fff" stroke-linejoin="round"><path d="M0 0 L3.9 -2.25 L12.5 -2.25 L12.5 2.25 L3.9 2.25 Z"/><rect x="13.05" y="-2.25" width="4.1" height="4.5" rx="1.6"/><circle cx="2.3" cy="0" r="0.85" fill="#3d5563" stroke="none"/></g></svg>
<svg style="left:190.80px;top:475.89px;" width="15" height="15" viewBox="-0.5 -0.5 15 15"><g transform="translate(0.3,13.6) rotate(-45)" stroke="#3d5563" stroke-width="1.2" paint-order="stroke" fill="#fff" stroke-linejoin="round"><path d="M0 0 L3.9 -2.25 L12.5 -2.25 L12.5 2.25 L3.9 2.25 Z"/><rect x="13.05" y="-2.25" width="4.1" height="4.5" rx="1.6"/><circle cx="2.3" cy="0" r="0.85" fill="#3d5563" stroke="none"/></g></svg>
<svg style="left:190.80px;top:499.58px;" width="15" height="15" viewBox="-0.5 -0.5 15 15"><g transform="translate(0.3,13.6) rotate(-45)" stroke="#3d5563" stroke-width="1.2" paint-order="stroke" fill="#fff" stroke-linejoin="round"><path d="M0 0 L3.9 -2.25 L12.5 -2.25 L12.5 2.25 L3.9 2.25 Z"/><rect x="13.05" y="-2.25" width="4.1" height="4.5" rx="1.6"/><circle cx="2.3" cy="0" r="0.85" fill="#3d5563" stroke="none"/></g></svg>
<svg style="left:190.80px;top:523.27px;" width="15" height="15" viewBox="-0.5 -0.5 15 15"><g transform="translate(0.3,13.6) rotate(-45)" stroke="#3d5563" stroke-width="1.2" paint-order="stroke" fill="#fff" stroke-linejoin="round"><path d="M0 0 L3.9 -2.25 L12.5 -2.25 L12.5 2.25 L3.9 2.25 Z"/><rect x="13.05" y="-2.25" width="4.1" height="4.5" rx="1.6"/><circle cx="2.3" cy="0" r="0.85" fill="#3d5563" stroke="none"/></g></svg>
<svg style="left:190.80px;top:546.96px;" width="15" height="15" viewBox="-0.5 -0.5 15 15"><g transform="translate(0.3,13.6) rotate(-45)" stroke="#3d5563" stroke-width="1.2" paint-order="stroke" fill="#fff" stroke-linejoin="round"><path d="M0 0 L3.9 -2.25 L12.5 -2.25 L12.5 2.25 L3.9 2.25 Z"/><rect x="13.05" y="-2.25" width="4.1" height="4.5" rx="1.6"/><circle cx="2.3" cy="0" r="0.85" fill="#3d5563" stroke="none"/></g></svg>
<svg style="left:190.80px;top:570.65px;" width="15" height="15" viewBox="-0.5 -0.5 15 15"><g transform="translate(0.3,13.6) rotate(-45)" stroke="#3d5563" stroke-width="1.2" paint-order="stroke" fill="#fff" stroke-linejoin="round"><path d="M0 0 L3.9 -2.25 L12.5 -2.25 L12.5 2.25 L3.9 2.25 Z"/><rect x="13.05" y="-2.25" width="4.1" height="4.5" rx="1.6"/><circle cx="2.3" cy="0" r="0.85" fill="#3d5563" stroke="none"/></g></svg>
<svg style="left:190.80px;top:594.34px;" width="15" height="15" viewBox="-0.5 -0.5 15 15"><g transform="translate(0.3,13.6) rotate(-45)" stroke="#3d5563" stroke-width="1.2" paint-order="stroke" fill="#fff" stroke-linejoin="round"><path d="M0 0 L3.9 -2.25 L12.5 -2.25 L12.5 2.25 L3.9 2.25 Z"/><rect x="13.05" y="-2.25" width="4.1" height="4.5" rx="1.6"/><circle cx="2.3" cy="0" r="0.85" fill="#3d5563" stroke="none"/></g></svg>
<svg style="left:190.80px;top:618.03px;" width="15" height="15" viewBox="-0.5 -0.5 15 15"><g transform="translate(0.3,13.6) rotate(-45)" stroke="#3d5563" stroke-width="1.2" paint-order="stroke" fill="#fff" stroke-linejoin="round"><path d="M0 0 L3.9 -2.25 L12.5 -2.25 L12.5 2.25 L3.9 2.25 Z"/><rect x="13.05" y="-2.25" width="4.1" height="4.5" rx="1.6"/><circle cx="2.3" cy="0" r="0.85" fill="#3d5563" stroke="none"/></g></svg>
<svg style="left:190.80px;top:641.72px;" width="15" height="15" viewBox="-0.5 -0.5 15 15"><g transform="translate(0.3,13.6) rotate(-45)" stroke="#3d5563" stroke-width="1.2" paint-order="stroke" fill="#fff" stroke-linejoin="round"><path d="M0 0 L3.9 -2.25 L12.5 -2.25 L12.5 2.25 L3.9 2.25 Z"/><rect x="13.05" y="-2.25" width="4.1" height="4.5" rx="1.6"/><circle cx="2.3" cy="0" r="0.85" fill="#3d5563" stroke="none"/></g></svg>
<svg style="left:190.80px;top:665.41px;" width="15" height="15" viewBox="-0.5 -0.5 15 15"><g transform="translate(0.3,13.6) rotate(-45)" stroke="#3d5563" stroke-width="1.2" paint-order="stroke" fill="#fff" stroke-linejoin="round"><path d="M0 0 L3.9 -2.25 L12.5 -2.25 L12.5 2.25 L3.9 2.25 Z"/><rect x="13.05" y="-2.25" width="4.1" height="4.5" rx="1.6"/><circle cx="2.3" cy="0" r="0.85" fill="#3d5563" stroke="none"/></g></svg>
<svg style="left:190.80px;top:689.10px;" width="15" height="15" viewBox="-0.5 -0.5 15 15"><g transform="translate(0.3,13.6) rotate(-45)" stroke="#3d5563" stroke-width="1.2" paint-order="stroke" fill="#fff" stroke-linejoin="round"><path d="M0 0 L3.9 -2.25 L12.5 -2.25 L12.5 2.25 L3.9 2.25 Z"/><rect x="13.05" y="-2.25" width="4.1" height="4.5" rx="1.6"/><circle cx="2.3" cy="0" r="0.85" fill="#3d5563" stroke="none"/></g></svg>
<svg style="left:190.80px;top:712.79px;" width="15" height="15" viewBox="-0.5 -0.5 15 15"><g transform="translate(0.3,13.6) rotate(-45)" stroke="#3d5563" stroke-width="1.2" paint-order="stroke" fill="#fff" stroke-linejoin="round"><path d="M0 0 L3.9 -2.25 L12.5 -2.25 L12.5 2.25 L3.9 2.25 Z"/><rect x="13.05" y="-2.25" width="4.1" height="4.5" rx="1.6"/><circle cx="2.3" cy="0" r="0.85" fill="#3d5563" stroke="none"/></g></svg>
<svg style="left:190.80px;top:736.48px;" width="15" height="15" viewBox="-0.5 -0.5 15 15"><g transform="translate(0.3,13.6) rotate(-45)" stroke="#3d5563" stroke-width="1.2" paint-order="stroke" fill="#fff" stroke-linejoin="round"><path d="M0 0 L3.9 -2.25 L12.5 -2.25 L12.5 2.25 L3.9 2.25 Z"/><rect x="13.05" y="-2.25" width="4.1" height="4.5" rx="1.6"/><circle cx="2.3" cy="0" r="0.85" fill="#3d5563" stroke="none"/></g></svg>
<div style="left:13.00px;top:774.30px;width:887.00px;height:1.20px;background:#e4e9ec;"></div>
<div style="left:13.00px;top:812.30px;width:887.00px;height:1.20px;background:#e4e9ec;"></div>
<div style="left:13.00px;top:774.30px;width:1.20px;height:39.20px;background:#e4e9ec;"></div>
<svg style="left:19.30px;top:787.80px;" width="10.2" height="11.6" viewBox="0 0 10.2 11.6"><path d="M0 0 L10.2 5.8 L0 11.6 Z" fill="#fff"/></svg>
<div style="top:781.60px;font-size:17.25px;line-height:24px;height:24px;color:#fff;white-space:pre;left:32.76px;">Phases &amp; Aliases Table</div>
<svg style="left:17.70px;top:827.10px;" width="11.8" height="10.2" viewBox="0 0 11.8 10.2"><path d="M0 0 H11.8 L5.9 10.2 Z" fill="#fff"/></svg>
<div style="top:819.80px;font-size:17.25px;line-height:24px;height:24px;color:#fff;white-space:pre;left:32.16px;">Recipe Equilibration Chart</div>
<div style="left:18.00px;top:856.20px;width:11.00px;height:11.00px;background:#3e2723;"></div>
<div style="top:873.60px;font-size:11px;line-height:16px;height:16px;color:#fff;white-space:pre;left:17.21px;">M_Periclase</div>
<div style="left:93.00px;top:856.20px;width:11.00px;height:11.00px;background:#3d6178;"></div>
<div style="top:873.60px;font-size:11px;line-height:16px;height:16px;color:#fff;white-space:pre;left:92.21px;">C_Lime</div>
<div style="left:149.00px;top:856.20px;width:11.00px;height:11.00px;background:#5c55b5;"></div>
<div style="top:873.60px;font-size:11px;line-height:16px;height:16px;color:#fff;white-space:pre;left:148.21px;">C3A_Aluminate</div>
<div style="top:854.20px;font-size:10.8px;line-height:16px;height:16px;color:#fff;white-space:pre;left:861.82px;">C-N-K-S-H</div>
<div style="top:873.60px;font-size:10.8px;line-height:16px;height:16px;color:#fff;white-space:pre;left:860.82px;">ss</div>
<div style="left:34.00px;top:890.00px;width:1.00px;height:113.00px;background:#f4f4f4;"></div>
<div style="left:28.00px;top:997.00px;width:872.00px;height:1.00px;background:#f4f4f4;"></div>
<div style="left:28.00px;top:998.00px;width:872.00px;height:1.00px;background:rgba(244,244,244,.35);"></div>
<div style="left:28.00px;top:890.00px;width:6.00px;height:1.00px;background:#e6e9ea;"></div>
<div style="left:28.00px;top:918.00px;width:6.00px;height:1.00px;background:#e6e9ea;"></div>
<div style="left:28.00px;top:968.00px;width:6.00px;height:1.00px;background:#e6e9ea;"></div>
<div style="left:35.40px;top:895.40px;width:4.20px;height:45.40px;background:#3e2723;"></div>
<div style="left:39.60px;top:895.40px;width:4.40px;height:45.40px;background:#3d6178;"></div>
<div style="left:44.00px;top:895.40px;width:47.00px;height:45.40px;background:#5b54b4;"></div>
<div style="left:91.00px;top:895.40px;width:41.00px;height:45.40px;background:#77584f;"></div>
<div style="left:132.00px;top:895.40px;width:53.00px;height:45.40px;background:#4b833e;"></div>
<div style="left:185.00px;top:895.40px;width:115.00px;height:45.40px;background:#6e6e6e;"></div>
<div style="left:35.00px;top:945.80px;width:0.80px;height:45.20px;background:#3a2a4a;"></div>
<div style="left:35.80px;top:945.80px;width:16.80px;height:45.20px;background:#5b54b4;"></div>
<div style="left:52.60px;top:945.80px;width:7.40px;height:45.20px;background:#77584f;"></div>
<div style="left:60.00px;top:945.80px;width:23.60px;height:45.20px;background:#4b833e;"></div>
<div style="left:83.60px;top:945.80px;width:49.40px;height:45.20px;background:#6e6e6e;"></div>
<div style="left:133.00px;top:945.80px;width:64.00px;height:45.20px;background:#fb7bbe;"></div>
<div style="left:197.00px;top:945.80px;width:103.00px;height:45.20px;background:#98e090;"></div>
<div style="left:860.00px;top:895.40px;width:41.00px;height:45.40px;background:#8ef4fb;"></div>
<div style="left:860.00px;top:945.80px;width:41.00px;height:45.20px;background:#f9a877;"></div>
<div style="left:-20.60px;top:908.80px;width:80px;height:16px;line-height:16px;text-align:center;font-size:11px;font-weight:bold;color:#fff;-webkit-text-stroke:0.25px #fff;transform:rotate(-90deg);">Inputs</div>
<div style="left:-20.60px;top:962.60px;width:80px;height:16px;line-height:16px;text-align:center;font-size:11px;font-weight:bold;color:#fff;-webkit-text-stroke:0.25px #fff;transform:rotate(-90deg);">Results</div>
<div style="top:1003.00px;font-size:11px;line-height:16px;height:16px;color:#fff;white-space:pre;left:30.21px;">0</div>
<div style="top:1003.00px;font-size:10.8px;line-height:16px;height:16px;color:#fff;white-space:pre;font-weight:bold;left:42.72px;">Volume [ cm³ ]</div>
<div style="left:13.00px;top:1022.00px;width:887.00px;height:1.00px;background:#d3d9dc;"></div>
<div style="left:13.00px;top:1023.00px;width:887.00px;height:1.00px;background:rgba(211,217,220,.55);"></div>
<div style="left:213.40px;top:377.00px;width:654.00px;height:652.00px;background:#3d5361;box-shadow:0 0 0 0.8px #4a4644;"></div>
<div style="left:214.00px;top:377.00px;width:653.40px;height:37.70px;background:#243a46;"></div>
<div style="left:214.00px;top:414.70px;width:653.40px;height:28.10px;background:#ebebeb;"></div>
<div style="left:851.00px;top:442.80px;width:16.40px;height:586.20px;background:#fafafa;"></div>
<div style="left:855.80px;top:446.00px;width:8.00px;height:423.60px;background:#c1c1c1;border-radius:4px;"></div>
<svg style="left:858.60px;top:1020.20px;" width="9" height="9" viewBox="0 0 9 9"><path d="M1.4 8.6 L8.6 1.4 M5 8.6 L8.6 5" stroke="#6a6a6a" stroke-width="1.1" fill="none"/></svg>
<svg style="left:221.50px;top:383.80px;" width="21" height="23" viewBox="0 0 21 23"><g fill="#d6dde1"><rect x="1.2" y="10.8" width="18.2" height="1.7"/><path d="M10.3 1.2 L14.4 6 H11.5 V8.2 H9.1 V6 H6.2 Z"/><path d="M10.3 22 L14.4 17.2 H11.5 V15 H9.1 V17.2 H6.2 Z"/></g></svg>
<svg style="left:253.50px;top:383.80px;" width="21" height="23" viewBox="0 0 21 23"><g fill="#d6dde1"><rect x="1.6" y="10.8" width="17.8" height="1.7"/><path d="M10.5 9.4 L14.4 5 H11.7 V2.2 H9.3 V5 H6.6 Z"/><path d="M10.5 13.9 L14.4 18.3 H11.7 V21.1 H9.3 V18.3 H6.6 Z"/></g></svg>
<svg style="left:293.00px;top:384.40px;" width="20" height="20" viewBox="0 0 20 20"><path d="M5 6.6 H10.2 A5.4 5.4 0 1 1 7.6 16.8" fill="none" stroke="#334a56" stroke-width="2.8"/><path d="M0.8 6.6 L6.4 2 V11.2 Z" fill="#334a56"/></svg>
<svg style="left:327.40px;top:384.40px;" width="20" height="20" viewBox="0 0 20 20"><path d="M15 6.6 H9.8 A5.4 5.4 0 1 0 12.4 16.8" fill="none" stroke="#334a56" stroke-width="2.8"/><path d="M19.2 6.6 L13.6 2 V11.2 Z" fill="#334a56"/></svg>
<div style="top:386.20px;font-size:14.9px;line-height:20px;height:20px;color:#fff;white-space:pre;left:370.23px;">Tree</div>
<svg style="left:406.20px;top:394.60px;" width="9" height="5.4" viewBox="0 0 9 5.4"><path d="M0 0 H9 L4.5 5.2 Z" fill="#fff"/></svg>
<div style="left:620.80px;top:382.20px;width:242.60px;height:28.00px;background:#fff;"></div>
<svg style="left:624.50px;top:385.50px;" width="20" height="20" viewBox="0 0 20 20"><circle cx="11.8" cy="7.2" r="4.7" fill="none" stroke="#c6c6c6" stroke-width="2"/><path d="M8.4 10.6 L2.8 16.2" stroke="#c6c6c6" stroke-width="3.4" fill="none"/></svg>
<svg style="left:825.20px;top:390.60px;" width="14" height="8" viewBox="0 0 14 8"><path d="M0 0 H13.6 L6.8 7.8 Z" fill="#d2d2d2"/></svg>
<svg style="left:842.00px;top:390.80px;" width="14" height="8" viewBox="0 0 14 8"><path d="M0 7.8 H13.8 L6.9 0 Z" fill="#d2d2d2"/></svg>
<div style="top:417.60px;font-size:15px;line-height:21px;height:21px;color:#6b6664;white-space:pre;left:219.22px;">object</div>
<svg style="left:264.80px;top:424.60px;" width="10.2" height="9.8" viewBox="0 0 10.2 9.8"><path d="M0 0 L10.2 4.9 L0 9.8 Z" fill="#868686"/></svg>
<div style="top:417.60px;font-size:15px;line-height:21px;height:21px;color:#6b6664;white-space:pre;left:278.22px;">formulae</div>
<svg style="left:343.20px;top:424.60px;" width="10.2" height="9.8" viewBox="0 0 10.2 9.8"><path d="M0 0 L10.2 4.9 L0 9.8 Z" fill="#868686"/></svg>
<div style="top:417.60px;font-size:15px;line-height:21px;height:21px;color:#6b6664;white-space:pre;left:355.72px;">2</div>
<svg style="left:369.90px;top:424.60px;" width="10.2" height="9.8" viewBox="0 0 10.2 9.8"><path d="M0 0 L10.2 4.9 L0 9.8 Z" fill="#868686"/></svg>
<div style="left:0;top:0;width:851px;height:1029.0px;overflow:hidden;">
<svg style="left:245.60px;top:448.30px;" width="14" height="15" viewBox="0 0 14 15"><rect x="0.9" y="0.9" width="11.3" height="12.8" fill="#33495a" stroke="#ececec" stroke-width="1.6"/><rect x="1.7" y="1.7" width="9.7" height="2.6" fill="#22333f"/><rect x="1.7" y="4.5" width="9.7" height="1.5" fill="#d8d8d8"/></svg>
<div style="left:265.20px;top:442.90px;width:25.60px;height:26.00px;background:#ebebeb;"></div>
<svg style="left:272.80px;top:451.80px;" width="10.6" height="8.4" viewBox="0 0 10.6 8.4"><path d="M0 0 H10.6 L5.3 8.4 Z" fill="#4d4d4d"/></svg>
<div style="top:446.00px;font-size:14.6px;line-height:20px;height:20px;color:#c9c3bc;white-space:pre;font-family:'Liberation Mono',monospace;left:295.00px;letter-spacing:-0.530px;-webkit-text-stroke:0.16px #c9c3bc;">object</div>
<div style="top:446.00px;font-size:14.6px;line-height:20px;height:20px;color:#c9c3bc;white-space:pre;font-family:'Liberation Mono',monospace;left:353.60px;letter-spacing:-0.530px;-webkit-text-stroke:0.16px #c9c3bc;">{12}</div>
<svg style="left:222.00px;top:473.18px;" width="9.2" height="15.8" viewBox="0 0 9.2 15.8"><g fill="#e9e9e9"><rect x="0" y="0" width="3.2" height="3" /><rect x="0" y="6.3" width="3.2" height="3" /><rect x="0" y="12.6" width="3.2" height="3" /><rect x="5.9" y="0" width="3.2" height="3" /><rect x="5.9" y="6.3" width="3.2" height="3" /><rect x="5.9" y="12.6" width="3.2" height="3" /></g></svg>
<svg style="left:245.60px;top:473.98px;" width="14" height="15" viewBox="0 0 14 15"><rect x="0.9" y="0.9" width="11.3" height="12.8" fill="#33495a" stroke="#ececec" stroke-width="1.6"/><rect x="1.7" y="1.7" width="9.7" height="2.6" fill="#22333f"/><rect x="1.7" y="4.5" width="9.7" height="1.5" fill="#d8d8d8"/></svg>
<div style="top:471.68px;font-size:14.6px;line-height:20px;height:20px;color:#ffffff;white-space:pre;font-family:'Liberation Mono',monospace;left:320.50px;letter-spacing:-0.530px;-webkit-text-stroke:0.16px #ffffff;">Comment</div>
<div style="top:471.28px;font-size:14.6px;line-height:20px;height:20px;color:#bdb6ae;white-space:pre;font-family:'Liberation Mono',monospace;left:383.11px;letter-spacing:-0.530px;-webkit-text-stroke:0.16px #bdb6ae;">:</div>
<div style="top:471.68px;font-size:14.6px;line-height:20px;height:20px;color:#25f392;white-space:pre;font-family:'Liberation Mono',monospace;left:395.51px;letter-spacing:-0.530px;-webkit-text-stroke:0.16px #25f392;">Normative sea salt (35 g/kgsw)</div>
<svg style="left:222.00px;top:498.86px;" width="9.2" height="15.8" viewBox="0 0 9.2 15.8"><g fill="#e9e9e9"><rect x="0" y="0" width="3.2" height="3" /><rect x="0" y="6.3" width="3.2" height="3" /><rect x="0" y="12.6" width="3.2" height="3" /><rect x="5.9" y="0" width="3.2" height="3" /><rect x="5.9" y="6.3" width="3.2" height="3" /><rect x="5.9" y="12.6" width="3.2" height="3" /></g></svg>
<svg style="left:245.60px;top:499.66px;" width="14" height="15" viewBox="0 0 14 15"><rect x="0.9" y="0.9" width="11.3" height="12.8" fill="#33495a" stroke="#ececec" stroke-width="1.6"/><rect x="1.7" y="1.7" width="9.7" height="2.6" fill="#22333f"/><rect x="1.7" y="4.5" width="9.7" height="1.5" fill="#d8d8d8"/></svg>
<div style="top:497.36px;font-size:14.6px;line-height:20px;height:20px;color:#ffffff;white-space:pre;font-family:'Liberation Mono',monospace;left:320.50px;letter-spacing:-0.530px;-webkit-text-stroke:0.16px #ffffff;">Constituent</div>
<div style="top:496.96px;font-size:14.6px;line-height:20px;height:20px;color:#bdb6ae;white-space:pre;font-family:'Liberation Mono',monospace;left:416.03px;letter-spacing:-0.530px;-webkit-text-stroke:0.16px #bdb6ae;">:</div>
<div style="top:497.36px;font-size:14.6px;line-height:20px;height:20px;color:#25f392;white-space:pre;font-family:'Liberation Mono',monospace;left:428.43px;letter-spacing:-0.530px;-webkit-text-stroke:0.16px #25f392;">Sea_salt</div>
<svg style="left:222.00px;top:524.54px;" width="9.2" height="15.8" viewBox="0 0 9.2 15.8"><g fill="#e9e9e9"><rect x="0" y="0" width="3.2" height="3" /><rect x="0" y="6.3" width="3.2" height="3" /><rect x="0" y="12.6" width="3.2" height="3" /><rect x="5.9" y="0" width="3.2" height="3" /><rect x="5.9" y="6.3" width="3.2" height="3" /><rect x="5.9" y="12.6" width="3.2" height="3" /></g></svg>
<svg style="left:245.60px;top:525.34px;" width="14" height="15" viewBox="0 0 14 15"><rect x="0.9" y="0.9" width="11.3" height="12.8" fill="#33495a" stroke="#ececec" stroke-width="1.6"/><rect x="1.7" y="1.7" width="9.7" height="2.6" fill="#22333f"/><rect x="1.7" y="4.5" width="9.7" height="1.5" fill="#d8d8d8"/></svg>
<div style="top:523.04px;font-size:14.6px;line-height:20px;height:20px;color:#ffffff;white-space:pre;font-family:'Liberation Mono',monospace;left:320.50px;letter-spacing:-0.530px;-webkit-text-stroke:0.16px #ffffff;">Density</div>
<div style="top:522.64px;font-size:14.6px;line-height:20px;height:20px;color:#bdb6ae;white-space:pre;font-family:'Liberation Mono',monospace;left:383.11px;letter-spacing:-0.530px;-webkit-text-stroke:0.16px #bdb6ae;">:</div>
<div style="top:523.04px;font-size:14.6px;line-height:20px;height:20px;color:#f8364a;white-space:pre;font-family:'Liberation Mono',monospace;left:395.51px;letter-spacing:-0.530px;-webkit-text-stroke:0.16px #f8364a;">0</div>
<svg style="left:222.00px;top:550.22px;" width="9.2" height="15.8" viewBox="0 0 9.2 15.8"><g fill="#e9e9e9"><rect x="0" y="0" width="3.2" height="3" /><rect x="0" y="6.3" width="3.2" height="3" /><rect x="0" y="12.6" width="3.2" height="3" /><rect x="5.9" y="0" width="3.2" height="3" /><rect x="5.9" y="6.3" width="3.2" height="3" /><rect x="5.9" y="12.6" width="3.2" height="3" /></g></svg>
<svg style="left:245.60px;top:551.02px;" width="14" height="15" viewBox="0 0 14 15"><rect x="0.9" y="0.9" width="11.3" height="12.8" fill="#33495a" stroke="#ececec" stroke-width="1.6"/><rect x="1.7" y="1.7" width="9.7" height="2.6" fill="#22333f"/><rect x="1.7" y="4.5" width="9.7" height="1.5" fill="#d8d8d8"/></svg>
<div style="top:548.72px;font-size:14.6px;line-height:20px;height:20px;color:#ffffff;white-space:pre;font-family:'Liberation Mono',monospace;left:320.50px;letter-spacing:-0.530px;-webkit-text-stroke:0.16px #ffffff;">Enthalpy</div>
<div style="top:548.32px;font-size:14.6px;line-height:20px;height:20px;color:#bdb6ae;white-space:pre;font-family:'Liberation Mono',monospace;left:391.34px;letter-spacing:-0.530px;-webkit-text-stroke:0.16px #bdb6ae;">:</div>
<div style="top:548.72px;font-size:14.6px;line-height:20px;height:20px;color:#f8364a;white-space:pre;font-family:'Liberation Mono',monospace;left:403.74px;letter-spacing:-0.530px;-webkit-text-stroke:0.16px #f8364a;">-10</div>
<svg style="left:222.00px;top:575.90px;" width="9.2" height="15.8" viewBox="0 0 9.2 15.8"><g fill="#e9e9e9"><rect x="0" y="0" width="3.2" height="3" /><rect x="0" y="6.3" width="3.2" height="3" /><rect x="0" y="12.6" width="3.2" height="3" /><rect x="5.9" y="0" width="3.2" height="3" /><rect x="5.9" y="6.3" width="3.2" height="3" /><rect x="5.9" y="12.6" width="3.2" height="3" /></g></svg>
<svg style="left:245.60px;top:576.70px;" width="14" height="15" viewBox="0 0 14 15"><rect x="0.9" y="0.9" width="11.3" height="12.8" fill="#33495a" stroke="#ececec" stroke-width="1.6"/><rect x="1.7" y="1.7" width="9.7" height="2.6" fill="#22333f"/><rect x="1.7" y="4.5" width="9.7" height="1.5" fill="#d8d8d8"/></svg>
<div style="top:574.40px;font-size:14.6px;line-height:20px;height:20px;color:#ffffff;white-space:pre;font-family:'Liberation Mono',monospace;left:320.50px;letter-spacing:-0.530px;-webkit-text-stroke:0.16px #ffffff;">Quantity</div>
<div style="top:574.00px;font-size:14.6px;line-height:20px;height:20px;color:#bdb6ae;white-space:pre;font-family:'Liberation Mono',monospace;left:391.34px;letter-spacing:-0.530px;-webkit-text-stroke:0.16px #bdb6ae;">:</div>
<div style="top:574.40px;font-size:14.6px;line-height:20px;height:20px;color:#f8364a;white-space:pre;font-family:'Liberation Mono',monospace;left:403.74px;letter-spacing:-0.530px;-webkit-text-stroke:0.16px #f8364a;">0</div>
<svg style="left:222.00px;top:601.58px;" width="9.2" height="15.8" viewBox="0 0 9.2 15.8"><g fill="#e9e9e9"><rect x="0" y="0" width="3.2" height="3" /><rect x="0" y="6.3" width="3.2" height="3" /><rect x="0" y="12.6" width="3.2" height="3" /><rect x="5.9" y="0" width="3.2" height="3" /><rect x="5.9" y="6.3" width="3.2" height="3" /><rect x="5.9" y="12.6" width="3.2" height="3" /></g></svg>
<svg style="left:245.60px;top:602.38px;" width="14" height="15" viewBox="0 0 14 15"><rect x="0.9" y="0.9" width="11.3" height="12.8" fill="#33495a" stroke="#ececec" stroke-width="1.6"/><rect x="1.7" y="1.7" width="9.7" height="2.6" fill="#22333f"/><rect x="1.7" y="4.5" width="9.7" height="1.5" fill="#d8d8d8"/></svg>
<div style="top:600.08px;font-size:14.6px;line-height:20px;height:20px;color:#ffffff;white-space:pre;font-family:'Liberation Mono',monospace;left:320.50px;letter-spacing:-0.530px;-webkit-text-stroke:0.16px #ffffff;">ReactExtent</div>
<div style="top:599.68px;font-size:14.6px;line-height:20px;height:20px;color:#bdb6ae;white-space:pre;font-family:'Liberation Mono',monospace;left:416.03px;letter-spacing:-0.530px;-webkit-text-stroke:0.16px #bdb6ae;">:</div>
<div style="top:600.08px;font-size:14.6px;line-height:20px;height:20px;color:#f8364a;white-space:pre;font-family:'Liberation Mono',monospace;left:428.43px;letter-spacing:-0.530px;-webkit-text-stroke:0.16px #f8364a;">1</div>
<svg style="left:222.00px;top:627.26px;" width="9.2" height="15.8" viewBox="0 0 9.2 15.8"><g fill="#e9e9e9"><rect x="0" y="0" width="3.2" height="3" /><rect x="0" y="6.3" width="3.2" height="3" /><rect x="0" y="12.6" width="3.2" height="3" /><rect x="5.9" y="0" width="3.2" height="3" /><rect x="5.9" y="6.3" width="3.2" height="3" /><rect x="5.9" y="12.6" width="3.2" height="3" /></g></svg>
<svg style="left:245.60px;top:628.06px;" width="14" height="15" viewBox="0 0 14 15"><rect x="0.9" y="0.9" width="11.3" height="12.8" fill="#33495a" stroke="#ececec" stroke-width="1.6"/><rect x="1.7" y="1.7" width="9.7" height="2.6" fill="#22333f"/><rect x="1.7" y="4.5" width="9.7" height="1.5" fill="#d8d8d8"/></svg>
<div style="top:625.76px;font-size:14.6px;line-height:20px;height:20px;color:#ffffff;white-space:pre;font-family:'Liberation Mono',monospace;left:320.50px;letter-spacing:-0.530px;-webkit-text-stroke:0.16px #ffffff;">UnitD</div>
<div style="top:625.36px;font-size:14.6px;line-height:20px;height:20px;color:#bdb6ae;white-space:pre;font-family:'Liberation Mono',monospace;left:366.65px;letter-spacing:-0.530px;-webkit-text-stroke:0.16px #bdb6ae;">:</div>
<div style="top:625.76px;font-size:14.6px;line-height:20px;height:20px;color:#25f392;white-space:pre;font-family:'Liberation Mono',monospace;left:379.05px;letter-spacing:-0.530px;-webkit-text-stroke:0.16px #25f392;">g/cm^3</div>
<svg style="left:222.00px;top:652.94px;" width="9.2" height="15.8" viewBox="0 0 9.2 15.8"><g fill="#e9e9e9"><rect x="0" y="0" width="3.2" height="3" /><rect x="0" y="6.3" width="3.2" height="3" /><rect x="0" y="12.6" width="3.2" height="3" /><rect x="5.9" y="0" width="3.2" height="3" /><rect x="5.9" y="6.3" width="3.2" height="3" /><rect x="5.9" y="12.6" width="3.2" height="3" /></g></svg>
<svg style="left:245.60px;top:653.74px;" width="14" height="15" viewBox="0 0 14 15"><rect x="0.9" y="0.9" width="11.3" height="12.8" fill="#33495a" stroke="#ececec" stroke-width="1.6"/><rect x="1.7" y="1.7" width="9.7" height="2.6" fill="#22333f"/><rect x="1.7" y="4.5" width="9.7" height="1.5" fill="#d8d8d8"/></svg>
<div style="top:651.44px;font-size:14.6px;line-height:20px;height:20px;color:#ffffff;white-space:pre;font-family:'Liberation Mono',monospace;left:320.50px;letter-spacing:-0.530px;-webkit-text-stroke:0.16px #ffffff;">UnitQ</div>
<div style="top:651.04px;font-size:14.6px;line-height:20px;height:20px;color:#bdb6ae;white-space:pre;font-family:'Liberation Mono',monospace;left:366.65px;letter-spacing:-0.530px;-webkit-text-stroke:0.16px #bdb6ae;">:</div>
<div style="top:651.44px;font-size:14.6px;line-height:20px;height:20px;color:#25f392;white-space:pre;font-family:'Liberation Mono',monospace;left:379.05px;letter-spacing:-0.530px;-webkit-text-stroke:0.16px #25f392;">%mass</div>
<svg style="left:222.00px;top:678.62px;" width="9.2" height="15.8" viewBox="0 0 9.2 15.8"><g fill="#e9e9e9"><rect x="0" y="0" width="3.2" height="3" /><rect x="0" y="6.3" width="3.2" height="3" /><rect x="0" y="12.6" width="3.2" height="3" /><rect x="5.9" y="0" width="3.2" height="3" /><rect x="5.9" y="6.3" width="3.2" height="3" /><rect x="5.9" y="12.6" width="3.2" height="3" /></g></svg>
<svg style="left:245.60px;top:679.42px;" width="14" height="15" viewBox="0 0 14 15"><rect x="0.9" y="0.9" width="11.3" height="12.8" fill="#33495a" stroke="#ececec" stroke-width="1.6"/><rect x="1.7" y="1.7" width="9.7" height="2.6" fill="#22333f"/><rect x="1.7" y="4.5" width="9.7" height="1.5" fill="#d8d8d8"/></svg>
<div style="top:677.12px;font-size:14.6px;line-height:20px;height:20px;color:#ffffff;white-space:pre;font-family:'Liberation Mono',monospace;left:320.50px;letter-spacing:-0.530px;-webkit-text-stroke:0.16px #ffffff;">UnitV</div>
<div style="top:676.72px;font-size:14.6px;line-height:20px;height:20px;color:#bdb6ae;white-space:pre;font-family:'Liberation Mono',monospace;left:366.65px;letter-spacing:-0.530px;-webkit-text-stroke:0.16px #bdb6ae;">:</div>
<div style="top:677.12px;font-size:14.6px;line-height:20px;height:20px;color:#25f392;white-space:pre;font-family:'Liberation Mono',monospace;left:379.05px;letter-spacing:-0.530px;-webkit-text-stroke:0.16px #25f392;">cm^3</div>
<svg style="left:222.00px;top:704.30px;" width="9.2" height="15.8" viewBox="0 0 9.2 15.8"><g fill="#e9e9e9"><rect x="0" y="0" width="3.2" height="3" /><rect x="0" y="6.3" width="3.2" height="3" /><rect x="0" y="12.6" width="3.2" height="3" /><rect x="5.9" y="0" width="3.2" height="3" /><rect x="5.9" y="6.3" width="3.2" height="3" /><rect x="5.9" y="12.6" width="3.2" height="3" /></g></svg>
<svg style="left:245.60px;top:705.10px;" width="14" height="15" viewBox="0 0 14 15"><rect x="0.9" y="0.9" width="11.3" height="12.8" fill="#33495a" stroke="#ececec" stroke-width="1.6"/><rect x="1.7" y="1.7" width="9.7" height="2.6" fill="#22333f"/><rect x="1.7" y="4.5" width="9.7" height="1.5" fill="#d8d8d8"/></svg>
<div style="top:702.80px;font-size:14.6px;line-height:20px;height:20px;color:#ffffff;white-space:pre;font-family:'Liberation Mono',monospace;left:320.50px;letter-spacing:-0.530px;-webkit-text-stroke:0.16px #ffffff;">Volume</div>
<div style="top:702.40px;font-size:14.6px;line-height:20px;height:20px;color:#bdb6ae;white-space:pre;font-family:'Liberation Mono',monospace;left:374.88px;letter-spacing:-0.530px;-webkit-text-stroke:0.16px #bdb6ae;">:</div>
<div style="top:702.80px;font-size:14.6px;line-height:20px;height:20px;color:#f8364a;white-space:pre;font-family:'Liberation Mono',monospace;left:387.28px;letter-spacing:-0.530px;-webkit-text-stroke:0.16px #f8364a;">0</div>
<svg style="left:222.00px;top:729.98px;" width="9.2" height="15.8" viewBox="0 0 9.2 15.8"><g fill="#e9e9e9"><rect x="0" y="0" width="3.2" height="3" /><rect x="0" y="6.3" width="3.2" height="3" /><rect x="0" y="12.6" width="3.2" height="3" /><rect x="5.9" y="0" width="3.2" height="3" /><rect x="5.9" y="6.3" width="3.2" height="3" /><rect x="5.9" y="12.6" width="3.2" height="3" /></g></svg>
<svg style="left:245.60px;top:730.78px;" width="14" height="15" viewBox="0 0 14 15"><rect x="0.9" y="0.9" width="11.3" height="12.8" fill="#33495a" stroke="#ececec" stroke-width="1.6"/><rect x="1.7" y="1.7" width="9.7" height="2.6" fill="#22333f"/><rect x="1.7" y="4.5" width="9.7" height="1.5" fill="#d8d8d8"/></svg>
<div style="left:291.00px;top:725.38px;width:25.60px;height:26.00px;background:#ebebeb;"></div>
<svg style="left:298.60px;top:734.28px;" width="10.6" height="8.4" viewBox="0 0 10.6 8.4"><path d="M0 0 H10.6 L5.3 8.4 Z" fill="#4d4d4d"/></svg>
<div style="top:728.48px;font-size:14.6px;line-height:20px;height:20px;color:#ffffff;white-space:pre;font-family:'Liberation Mono',monospace;left:320.50px;letter-spacing:-0.530px;-webkit-text-stroke:0.16px #ffffff;">formulae</div>
<div style="top:728.48px;font-size:14.6px;line-height:20px;height:20px;color:#b3afab;white-space:pre;font-family:'Liberation Mono',monospace;left:397.20px;letter-spacing:-0.530px;-webkit-text-stroke:0.16px #b3afab;">[9]</div>
<svg style="left:222.00px;top:755.66px;" width="9.2" height="15.8" viewBox="0 0 9.2 15.8"><g fill="#e9e9e9"><rect x="0" y="0" width="3.2" height="3" /><rect x="0" y="6.3" width="3.2" height="3" /><rect x="0" y="12.6" width="3.2" height="3" /><rect x="5.9" y="0" width="3.2" height="3" /><rect x="5.9" y="6.3" width="3.2" height="3" /><rect x="5.9" y="12.6" width="3.2" height="3" /></g></svg>
<svg style="left:245.60px;top:756.46px;" width="14" height="15" viewBox="0 0 14 15"><rect x="0.9" y="0.9" width="11.3" height="12.8" fill="#33495a" stroke="#ececec" stroke-width="1.6"/><rect x="1.7" y="1.7" width="9.7" height="2.6" fill="#22333f"/><rect x="1.7" y="4.5" width="9.7" height="1.5" fill="#d8d8d8"/></svg>
<div style="left:316.80px;top:751.06px;width:25.60px;height:26.00px;background:#ebebeb;"></div>
<svg style="left:324.40px;top:759.96px;" width="10.6" height="8.4" viewBox="0 0 10.6 8.4"><path d="M0 0 H10.6 L5.3 8.4 Z" fill="#4d4d4d"/></svg>
<div style="top:754.16px;font-size:14.6px;line-height:20px;height:20px;color:#b3afab;white-space:pre;font-family:'Liberation Mono',monospace;left:346.50px;letter-spacing:-0.530px;-webkit-text-stroke:0.16px #b3afab;">0</div>
<div style="top:754.16px;font-size:14.6px;line-height:20px;height:20px;color:#b3afab;white-space:pre;font-family:'Liberation Mono',monospace;left:373.20px;letter-spacing:-0.530px;-webkit-text-stroke:0.16px #b3afab;">{3}</div>
<svg style="left:222.00px;top:781.34px;" width="9.2" height="15.8" viewBox="0 0 9.2 15.8"><g fill="#e9e9e9"><rect x="0" y="0" width="3.2" height="3" /><rect x="0" y="6.3" width="3.2" height="3" /><rect x="0" y="12.6" width="3.2" height="3" /><rect x="5.9" y="0" width="3.2" height="3" /><rect x="5.9" y="6.3" width="3.2" height="3" /><rect x="5.9" y="12.6" width="3.2" height="3" /></g></svg>
<svg style="left:245.60px;top:782.14px;" width="14" height="15" viewBox="0 0 14 15"><rect x="0.9" y="0.9" width="11.3" height="12.8" fill="#33495a" stroke="#ececec" stroke-width="1.6"/><rect x="1.7" y="1.7" width="9.7" height="2.6" fill="#22333f"/><rect x="1.7" y="4.5" width="9.7" height="1.5" fill="#d8d8d8"/></svg>
<div style="top:779.84px;font-size:14.6px;line-height:20px;height:20px;color:#ffffff;white-space:pre;font-family:'Liberation Mono',monospace;left:372.70px;letter-spacing:-0.530px;-webkit-text-stroke:0.16px #ffffff;">Formula</div>
<div style="top:779.44px;font-size:14.6px;line-height:20px;height:20px;color:#bdb6ae;white-space:pre;font-family:'Liberation Mono',monospace;left:435.31px;letter-spacing:-0.530px;-webkit-text-stroke:0.16px #bdb6ae;">:</div>
<div style="top:779.84px;font-size:14.6px;line-height:20px;height:20px;color:#25f392;white-space:pre;font-family:'Liberation Mono',monospace;left:447.71px;letter-spacing:-0.530px;-webkit-text-stroke:0.16px #25f392;">Cl</div>
<svg style="left:222.00px;top:807.02px;" width="9.2" height="15.8" viewBox="0 0 9.2 15.8"><g fill="#e9e9e9"><rect x="0" y="0" width="3.2" height="3" /><rect x="0" y="6.3" width="3.2" height="3" /><rect x="0" y="12.6" width="3.2" height="3" /><rect x="5.9" y="0" width="3.2" height="3" /><rect x="5.9" y="6.3" width="3.2" height="3" /><rect x="5.9" y="12.6" width="3.2" height="3" /></g></svg>
<svg style="left:245.60px;top:807.82px;" width="14" height="15" viewBox="0 0 14 15"><rect x="0.9" y="0.9" width="11.3" height="12.8" fill="#33495a" stroke="#ececec" stroke-width="1.6"/><rect x="1.7" y="1.7" width="9.7" height="2.6" fill="#22333f"/><rect x="1.7" y="4.5" width="9.7" height="1.5" fill="#d8d8d8"/></svg>
<div style="top:805.52px;font-size:14.6px;line-height:20px;height:20px;color:#ffffff;white-space:pre;font-family:'Liberation Mono',monospace;left:372.70px;letter-spacing:-0.530px;-webkit-text-stroke:0.16px #ffffff;">Quantity</div>
<div style="top:805.12px;font-size:14.6px;line-height:20px;height:20px;color:#bdb6ae;white-space:pre;font-family:'Liberation Mono',monospace;left:443.54px;letter-spacing:-0.530px;-webkit-text-stroke:0.16px #bdb6ae;">:</div>
<div style="top:805.52px;font-size:14.6px;line-height:20px;height:20px;color:#f8364a;white-space:pre;font-family:'Liberation Mono',monospace;left:455.94px;letter-spacing:-0.530px;-webkit-text-stroke:0.16px #f8364a;">0.546912</div>
<svg style="left:222.00px;top:832.70px;" width="9.2" height="15.8" viewBox="0 0 9.2 15.8"><g fill="#e9e9e9"><rect x="0" y="0" width="3.2" height="3" /><rect x="0" y="6.3" width="3.2" height="3" /><rect x="0" y="12.6" width="3.2" height="3" /><rect x="5.9" y="0" width="3.2" height="3" /><rect x="5.9" y="6.3" width="3.2" height="3" /><rect x="5.9" y="12.6" width="3.2" height="3" /></g></svg>
<svg style="left:245.60px;top:833.50px;" width="14" height="15" viewBox="0 0 14 15"><rect x="0.9" y="0.9" width="11.3" height="12.8" fill="#33495a" stroke="#ececec" stroke-width="1.6"/><rect x="1.7" y="1.7" width="9.7" height="2.6" fill="#22333f"/><rect x="1.7" y="4.5" width="9.7" height="1.5" fill="#d8d8d8"/></svg>
<div style="top:831.20px;font-size:14.6px;line-height:20px;height:20px;color:#ffffff;white-space:pre;font-family:'Liberation Mono',monospace;left:372.70px;letter-spacing:-0.530px;-webkit-text-stroke:0.16px #ffffff;">UnitQ</div>
<div style="top:830.80px;font-size:14.6px;line-height:20px;height:20px;color:#bdb6ae;white-space:pre;font-family:'Liberation Mono',monospace;left:418.85px;letter-spacing:-0.530px;-webkit-text-stroke:0.16px #bdb6ae;">:</div>
<div style="top:831.20px;font-size:14.6px;line-height:20px;height:20px;color:#25f392;white-space:pre;font-family:'Liberation Mono',monospace;left:431.25px;letter-spacing:-0.530px;-webkit-text-stroke:0.16px #25f392;">mol</div>
<svg style="left:222.00px;top:858.38px;" width="9.2" height="15.8" viewBox="0 0 9.2 15.8"><g fill="#e9e9e9"><rect x="0" y="0" width="3.2" height="3" /><rect x="0" y="6.3" width="3.2" height="3" /><rect x="0" y="12.6" width="3.2" height="3" /><rect x="5.9" y="0" width="3.2" height="3" /><rect x="5.9" y="6.3" width="3.2" height="3" /><rect x="5.9" y="12.6" width="3.2" height="3" /></g></svg>
<svg style="left:245.60px;top:859.18px;" width="14" height="15" viewBox="0 0 14 15"><rect x="0.9" y="0.9" width="11.3" height="12.8" fill="#33495a" stroke="#ececec" stroke-width="1.6"/><rect x="1.7" y="1.7" width="9.7" height="2.6" fill="#22333f"/><rect x="1.7" y="4.5" width="9.7" height="1.5" fill="#d8d8d8"/></svg>
<div style="left:316.80px;top:853.78px;width:25.60px;height:26.00px;background:#ebebeb;"></div>
<svg style="left:324.40px;top:862.68px;" width="10.6" height="8.4" viewBox="0 0 10.6 8.4"><path d="M0 0 H10.6 L5.3 8.4 Z" fill="#4d4d4d"/></svg>
<div style="top:856.88px;font-size:14.6px;line-height:20px;height:20px;color:#b3afab;white-space:pre;font-family:'Liberation Mono',monospace;left:346.50px;letter-spacing:-0.530px;-webkit-text-stroke:0.16px #b3afab;">1</div>
<div style="top:856.88px;font-size:14.6px;line-height:20px;height:20px;color:#b3afab;white-space:pre;font-family:'Liberation Mono',monospace;left:373.20px;letter-spacing:-0.530px;-webkit-text-stroke:0.16px #b3afab;">{3}</div>
<svg style="left:222.00px;top:884.06px;" width="9.2" height="15.8" viewBox="0 0 9.2 15.8"><g fill="#e9e9e9"><rect x="0" y="0" width="3.2" height="3" /><rect x="0" y="6.3" width="3.2" height="3" /><rect x="0" y="12.6" width="3.2" height="3" /><rect x="5.9" y="0" width="3.2" height="3" /><rect x="5.9" y="6.3" width="3.2" height="3" /><rect x="5.9" y="12.6" width="3.2" height="3" /></g></svg>
<svg style="left:245.60px;top:884.86px;" width="14" height="15" viewBox="0 0 14 15"><rect x="0.9" y="0.9" width="11.3" height="12.8" fill="#33495a" stroke="#ececec" stroke-width="1.6"/><rect x="1.7" y="1.7" width="9.7" height="2.6" fill="#22333f"/><rect x="1.7" y="4.5" width="9.7" height="1.5" fill="#d8d8d8"/></svg>
<div style="top:882.56px;font-size:14.6px;line-height:20px;height:20px;color:#ffffff;white-space:pre;font-family:'Liberation Mono',monospace;left:372.70px;letter-spacing:-0.530px;-webkit-text-stroke:0.16px #ffffff;">Formula</div>
<div style="top:882.16px;font-size:14.6px;line-height:20px;height:20px;color:#bdb6ae;white-space:pre;font-family:'Liberation Mono',monospace;left:435.31px;letter-spacing:-0.530px;-webkit-text-stroke:0.16px #bdb6ae;">:</div>
<div style="top:882.56px;font-size:14.6px;line-height:20px;height:20px;color:#25f392;white-space:pre;font-family:'Liberation Mono',monospace;left:447.71px;letter-spacing:-0.530px;-webkit-text-stroke:0.16px #25f392;">Na</div>
<svg style="left:222.00px;top:909.74px;" width="9.2" height="15.8" viewBox="0 0 9.2 15.8"><g fill="#e9e9e9"><rect x="0" y="0" width="3.2" height="3" /><rect x="0" y="6.3" width="3.2" height="3" /><rect x="0" y="12.6" width="3.2" height="3" /><rect x="5.9" y="0" width="3.2" height="3" /><rect x="5.9" y="6.3" width="3.2" height="3" /><rect x="5.9" y="12.6" width="3.2" height="3" /></g></svg>
<svg style="left:245.60px;top:910.54px;" width="14" height="15" viewBox="0 0 14 15"><rect x="0.9" y="0.9" width="11.3" height="12.8" fill="#33495a" stroke="#ececec" stroke-width="1.6"/><rect x="1.7" y="1.7" width="9.7" height="2.6" fill="#22333f"/><rect x="1.7" y="4.5" width="9.7" height="1.5" fill="#d8d8d8"/></svg>
<div style="top:908.24px;font-size:14.6px;line-height:20px;height:20px;color:#ffffff;white-space:pre;font-family:'Liberation Mono',monospace;left:372.70px;letter-spacing:-0.530px;-webkit-text-stroke:0.16px #ffffff;">Quantity</div>
<div style="top:907.84px;font-size:14.6px;line-height:20px;height:20px;color:#bdb6ae;white-space:pre;font-family:'Liberation Mono',monospace;left:443.54px;letter-spacing:-0.530px;-webkit-text-stroke:0.16px #bdb6ae;">:</div>
<div style="top:908.24px;font-size:14.6px;line-height:20px;height:20px;color:#f8364a;white-space:pre;font-family:'Liberation Mono',monospace;left:455.94px;letter-spacing:-0.530px;-webkit-text-stroke:0.16px #f8364a;">0.469</div>
<svg style="left:222.00px;top:935.42px;" width="9.2" height="15.8" viewBox="0 0 9.2 15.8"><g fill="#e9e9e9"><rect x="0" y="0" width="3.2" height="3" /><rect x="0" y="6.3" width="3.2" height="3" /><rect x="0" y="12.6" width="3.2" height="3" /><rect x="5.9" y="0" width="3.2" height="3" /><rect x="5.9" y="6.3" width="3.2" height="3" /><rect x="5.9" y="12.6" width="3.2" height="3" /></g></svg>
<svg style="left:245.60px;top:936.22px;" width="14" height="15" viewBox="0 0 14 15"><rect x="0.9" y="0.9" width="11.3" height="12.8" fill="#33495a" stroke="#ececec" stroke-width="1.6"/><rect x="1.7" y="1.7" width="9.7" height="2.6" fill="#22333f"/><rect x="1.7" y="4.5" width="9.7" height="1.5" fill="#d8d8d8"/></svg>
<div style="top:933.92px;font-size:14.6px;line-height:20px;height:20px;color:#ffffff;white-space:pre;font-family:'Liberation Mono',monospace;left:372.70px;letter-spacing:-0.530px;-webkit-text-stroke:0.16px #ffffff;">UnitQ</div>
<div style="top:933.52px;font-size:14.6px;line-height:20px;height:20px;color:#bdb6ae;white-space:pre;font-family:'Liberation Mono',monospace;left:418.85px;letter-spacing:-0.530px;-webkit-text-stroke:0.16px #bdb6ae;">:</div>
<div style="top:933.92px;font-size:14.6px;line-height:20px;height:20px;color:#25f392;white-space:pre;font-family:'Liberation Mono',monospace;left:431.25px;letter-spacing:-0.530px;-webkit-text-stroke:0.16px #25f392;">mol</div>
<svg style="left:222.00px;top:961.10px;" width="9.2" height="15.8" viewBox="0 0 9.2 15.8"><g fill="#e9e9e9"><rect x="0" y="0" width="3.2" height="3" /><rect x="0" y="6.3" width="3.2" height="3" /><rect x="0" y="12.6" width="3.2" height="3" /><rect x="5.9" y="0" width="3.2" height="3" /><rect x="5.9" y="6.3" width="3.2" height="3" /><rect x="5.9" y="12.6" width="3.2" height="3" /></g></svg>
<svg style="left:245.60px;top:961.90px;" width="14" height="15" viewBox="0 0 14 15"><rect x="0.9" y="0.9" width="11.3" height="12.8" fill="#33495a" stroke="#ececec" stroke-width="1.6"/><rect x="1.7" y="1.7" width="9.7" height="2.6" fill="#22333f"/><rect x="1.7" y="4.5" width="9.7" height="1.5" fill="#d8d8d8"/></svg>
<div style="left:316.80px;top:956.50px;width:25.60px;height:26.00px;background:#ebebeb;"></div>
<svg style="left:324.40px;top:965.40px;" width="10.6" height="8.4" viewBox="0 0 10.6 8.4"><path d="M0 0 H10.6 L5.3 8.4 Z" fill="#4d4d4d"/></svg>
<div style="top:959.60px;font-size:14.6px;line-height:20px;height:20px;color:#b3afab;white-space:pre;font-family:'Liberation Mono',monospace;left:346.50px;letter-spacing:-0.530px;-webkit-text-stroke:0.16px #b3afab;">2</div>
<div style="top:959.60px;font-size:14.6px;line-height:20px;height:20px;color:#b3afab;white-space:pre;font-family:'Liberation Mono',monospace;left:373.20px;letter-spacing:-0.530px;-webkit-text-stroke:0.16px #b3afab;">{3}</div>
<svg style="left:222.00px;top:986.78px;" width="9.2" height="15.8" viewBox="0 0 9.2 15.8"><g fill="#e9e9e9"><rect x="0" y="0" width="3.2" height="3" /><rect x="0" y="6.3" width="3.2" height="3" /><rect x="0" y="12.6" width="3.2" height="3" /><rect x="5.9" y="0" width="3.2" height="3" /><rect x="5.9" y="6.3" width="3.2" height="3" /><rect x="5.9" y="12.6" width="3.2" height="3" /></g></svg>
<svg style="left:245.60px;top:987.58px;" width="14" height="15" viewBox="0 0 14 15"><rect x="0.9" y="0.9" width="11.3" height="12.8" fill="#33495a" stroke="#ececec" stroke-width="1.6"/><rect x="1.7" y="1.7" width="9.7" height="2.6" fill="#22333f"/><rect x="1.7" y="4.5" width="9.7" height="1.5" fill="#d8d8d8"/></svg>
<div style="top:985.28px;font-size:14.6px;line-height:20px;height:20px;color:#ffffff;white-space:pre;font-family:'Liberation Mono',monospace;left:372.70px;letter-spacing:-0.530px;-webkit-text-stroke:0.16px #ffffff;">Formula</div>
<div style="top:984.88px;font-size:14.6px;line-height:20px;height:20px;color:#bdb6ae;white-space:pre;font-family:'Liberation Mono',monospace;left:435.31px;letter-spacing:-0.530px;-webkit-text-stroke:0.16px #bdb6ae;">:</div>
<div style="top:985.28px;font-size:14.6px;line-height:20px;height:20px;color:#25f392;white-space:pre;font-family:'Liberation Mono',monospace;left:447.71px;letter-spacing:-0.530px;-webkit-text-stroke:0.16px #25f392;">Mg</div>
<svg style="left:222.00px;top:1012.46px;" width="9.2" height="15.8" viewBox="0 0 9.2 15.8"><g fill="#e9e9e9"><rect x="0" y="0" width="3.2" height="3" /><rect x="0" y="6.3" width="3.2" height="3" /><rect x="0" y="12.6" width="3.2" height="3" /><rect x="5.9" y="0" width="3.2" height="3" /><rect x="5.9" y="6.3" width="3.2" height="3" /><rect x="5.9" y="12.6" width="3.2" height="3" /></g></svg>
<svg style="left:245.60px;top:1013.26px;" width="14" height="15" viewBox="0 0 14 15"><rect x="0.9" y="0.9" width="11.3" height="12.8" fill="#33495a" stroke="#ececec" stroke-width="1.6"/><rect x="1.7" y="1.7" width="9.7" height="2.6" fill="#22333f"/><rect x="1.7" y="4.5" width="9.7" height="1.5" fill="#d8d8d8"/></svg>
<div style="top:1010.96px;font-size:14.6px;line-height:20px;height:20px;color:#ffffff;white-space:pre;font-family:'Liberation Mono',monospace;left:372.70px;letter-spacing:-0.530px;-webkit-text-stroke:0.16px #ffffff;">Quantity</div>
<div style="top:1010.56px;font-size:14.6px;line-height:20px;height:20px;color:#bdb6ae;white-space:pre;font-family:'Liberation Mono',monospace;left:443.54px;letter-spacing:-0.530px;-webkit-text-stroke:0.16px #bdb6ae;">:</div>
<div style="top:1010.96px;font-size:14.6px;line-height:20px;height:20px;color:#f8364a;white-space:pre;font-family:'Liberation Mono',monospace;left:455.94px;letter-spacing:-0.530px;-webkit-text-stroke:0.16px #f8364a;">0.0528</div>
</div>
</main></body></html>
